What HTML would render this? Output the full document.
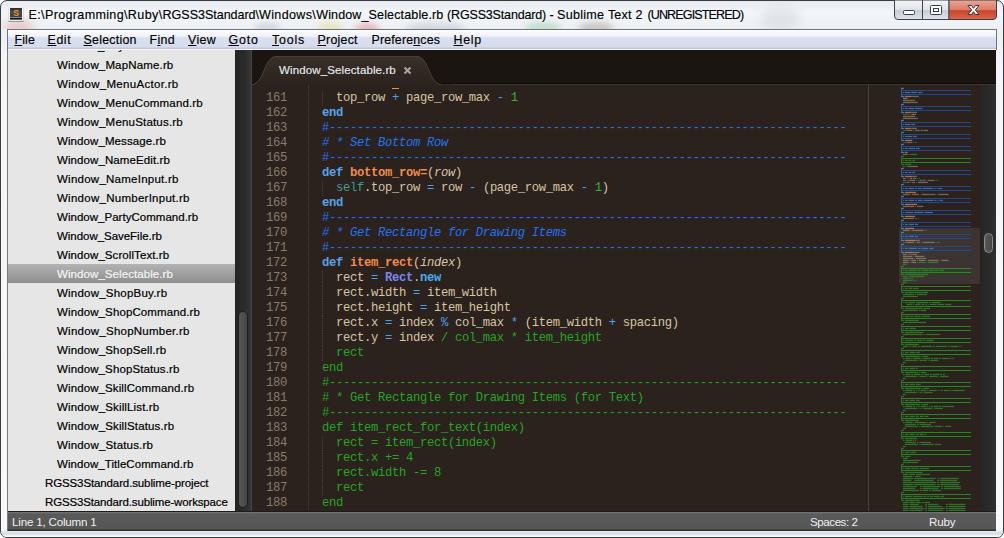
<!DOCTYPE html>
<html><head><meta charset="utf-8">
<style>
*{margin:0;padding:0;box-sizing:border-box}
html,body{width:1004px;height:538px;overflow:hidden;background:#fff}
body{position:relative;font-family:"Liberation Sans",sans-serif}
.abs{position:absolute}
#frame{left:0;top:0;width:1004px;height:538px;border-radius:7px 7px 7px 7px;border:1px solid #3b3b3b;
 background:linear-gradient(180deg,#e6ebf1 0px,#f3f6f9 12px,#eceff3 28px,#f4f5f7 60px,#f7f8f9 500px)}
.ttl{position:absolute;top:7px;font-size:12.56px;color:#000;-webkit-text-stroke:0.15px #000;white-space:pre;line-height:16px}
#menubar{left:7px;top:29px;width:990px;height:21px;border:1px solid #70747a;border-bottom:none;
 background:linear-gradient(180deg,#fdfdfe 0px,#f0f2f8 6px,#dadfef 8px,#d8ddee 17px,#c2c8d8 18px,#c2c8d8 19px,#f4f5f9 19px)}
.mi{position:absolute;top:33px;font-size:12.4px;color:#000;white-space:pre;line-height:14px;-webkit-text-stroke:0.15px #000}
.mi u{text-decoration:underline;text-underline-offset:1px}
#sidebar{left:8px;top:50px;width:227px;height:461px;background:#e6e6e6;overflow:hidden}
.si{position:absolute;left:0;width:227px;height:19px;font-size:11.5px;color:#000;white-space:pre;line-height:19px;padding-top:1px;-webkit-text-stroke:0.2px currentColor}
.si.sel{background:linear-gradient(180deg,#b3b3b3 0,#a4a4a4 40%,#8e8e8e 100%);color:#f4f4f4}
#lframe{left:7px;top:50px;width:1px;height:481px;background:#7a7a7a}
#sbscroll{left:235px;top:50px;width:17px;height:461px;background:linear-gradient(90deg,#242424,#2c2c2c 60%,#383838)}
#sbthumb{left:238px;top:311px;width:10px;height:197px;border-radius:5px;background:linear-gradient(90deg,#575757,#454545);border:1px solid #1e1e1e}
#tabbar{left:252px;top:50px;width:744px;height:35px;background:#1b1511}
#code{left:252px;top:85px;width:646px;height:426px;background:#2b221d;overflow:hidden}
#leftline{left:251px;top:50px;width:1px;height:461px;background:#464646}
#mm{left:898px;top:85px;width:82px;height:426px;background:#2b221d;overflow:hidden}
#vscroll{left:980px;top:85px;width:16px;height:426px;background:linear-gradient(90deg,#252525,#2e2e2e)}
#vthumb{left:984px;top:233px;width:9px;height:20px;border-radius:4.5px;background:linear-gradient(90deg,#5a5a5a,#444);border:1px solid #8c8c8c}
#status{left:8px;top:511px;width:988px;height:20px;background:linear-gradient(180deg,#1e1a18 0,#1e1a18 1px,#777 1px,#6a6a6a 2px,#5a5a5a 3px,#565656 18px,#2e2e2e 19px)}
.st{position:absolute;top:514px;font-size:11.6px;color:#f0f0f0;white-space:pre;line-height:15px}
.ln{position:absolute;left:0px;width:35px;text-align:right;font-family:"Liberation Mono",monospace;font-size:12.2px;letter-spacing:-0.32px;line-height:15px;color:#8a7c6c;white-space:pre}
.cl{position:absolute;left:56px;font-family:"Liberation Mono",monospace;font-size:12.2px;letter-spacing:-0.32px;line-height:15px;color:#d7c5a3;white-space:pre}
.k{color:#56a3ea;font-weight:bold}
.f{color:#f08c4c;font-weight:bold}
.c{color:#2272f6;font-style:italic}
.cd{color:#2272f6}
.o{color:#4aa0f0}
.n{color:#33b533}
.s{color:#3d9b9b}
.p{font-style:italic}
.cls{color:#7b86f2;font-weight:bold}
.nw{color:#45acf0;font-weight:bold}
.g{color:#24a524}
#tabtxt{left:279px;top:63px;font-size:11.55px;color:#e6eaee;-webkit-text-stroke:0.15px #e6eaee;letter-spacing:0.1px;white-space:pre;line-height:15px}
#btns{left:894px;top:0;width:103px;height:20px}
</style></head><body>
<div id="frame" class="abs"></div>
<div class="abs" style="left:0;top:0;width:1004px;height:29px;overflow:hidden;border-radius:7px 7px 0 0">
<div class="abs" style="left:4px;top:21px;width:30px;height:12px;border-radius:50%;background:#e09898;opacity:.5;filter:blur(4px)"></div>
<div class="abs" style="left:255px;top:22px;width:25px;height:12px;border-radius:50%;background:#b8c4d0;opacity:.5;filter:blur(3px)"></div>
<div class="abs" style="left:318px;top:22px;width:25px;height:12px;border-radius:50%;background:#e8d890;opacity:.55;filter:blur(3px)"></div>
<div class="abs" style="left:355px;top:23px;width:24px;height:12px;border-radius:50%;background:#e07878;opacity:.45;filter:blur(3px)"></div>
<div class="abs" style="left:405px;top:23px;width:60px;height:12px;border-radius:50%;background:#b0b8c4;opacity:.45;filter:blur(3px)"></div>
<div class="abs" style="left:525px;top:22px;width:36px;height:12px;border-radius:50%;background:#90c8a0;opacity:.45;filter:blur(3px)"></div>
<div class="abs" style="left:578px;top:22px;width:36px;height:12px;border-radius:50%;background:#a09890;opacity:.45;filter:blur(3px)"></div>
<div class="abs" style="left:760px;top:8px;width:40px;height:22px;border-radius:50%;background:#c8ccd2;opacity:.4;filter:blur(5px)"></div>
</div>

<svg class="abs" style="left:8px;top:7px" width="16" height="16" viewBox="0 0 16 16">
 <defs><linearGradient id="gi" x1="0" y1="0" x2="0" y2="1"><stop offset="0" stop-color="#2c2c2c"/><stop offset="0.3" stop-color="#4a4a4a"/><stop offset="1" stop-color="#3a3a3a"/></linearGradient></defs>
 <rect x="0.5" y="12.5" width="15" height="2.5" rx="1" fill="#3a3a3a" opacity="0.6"/>
 <rect x="0.5" y="0" width="15" height="14" rx="1.5" fill="#fdfdfd" stroke="#d0d0d0" stroke-width="0.6"/>
 <rect x="2" y="1" width="12" height="11.5" fill="url(#gi)"/>
 <rect x="2" y="10" width="12" height="0.9" fill="#9a9a9a"/>
 <rect x="2" y="10.9" width="12" height="1.6" fill="#1c1c1c"/>
 <text x="8" y="9.2" font-family="Liberation Sans" font-weight="bold" font-size="8.5" fill="#f7931e" text-anchor="middle">S</text>
</svg>
<div class="ttl" style="left:28.6px;letter-spacing:0.337px">E:\Programming\</div><div class="ttl" style="left:127.8px;letter-spacing:0.404px">Ruby\</div><div class="ttl" style="left:162.6px;letter-spacing:-0.04px">RGSS3Standard\</div><div class="ttl" style="left:259.0px;letter-spacing:0.351px">Windows\</div><div class="ttl" style="left:316.2px;letter-spacing:0.118px">Window_Selectable.rb </div><div class="ttl" style="left:447.0px;letter-spacing:-0.182px">(RGSS3Standard) </div><div class="ttl" style="left:549.4px;letter-spacing:0.014px">- </div><div class="ttl" style="left:557.1px;letter-spacing:0.246px">Sublime </div><div class="ttl" style="left:607.9px;letter-spacing:0.2px">Text </div><div class="ttl" style="left:635.4px;letter-spacing:0.766px">2 </div><div class="ttl" style="left:647.4px;letter-spacing:-0.875px">(UNREGISTERED)</div>
<svg id="btns" class="abs" width="103" height="20" viewBox="0 0 103 20">
 <defs>
  <linearGradient id="gb" x1="0" y1="0" x2="0" y2="1">
   <stop offset="0" stop-color="#f4f6f9"/><stop offset="0.5" stop-color="#dfe3e8"/><stop offset="0.55" stop-color="#c6ccd4"/><stop offset="1" stop-color="#dfe4ea"/>
  </linearGradient>
  <linearGradient id="gr" x1="0" y1="0" x2="0" y2="1">
   <stop offset="0" stop-color="#eaa698"/><stop offset="0.5" stop-color="#dc7c68"/><stop offset="0.55" stop-color="#c8432a"/><stop offset="1" stop-color="#dc6a4c"/>
  </linearGradient>
 </defs>
 <path d="M0.5,0 L0.5,16 Q0.5,19.5 4,19.5 L28.5,19.5 L28.5,0 Z" fill="url(#gb)" stroke="#3d424a"/>
 <path d="M28.5,0 L28.5,19.5 L55,19.5 L55,0 Z" fill="url(#gb)" stroke="#3d424a"/>
 <path d="M55,0 L55,19.5 L99,19.5 Q102.5,19.5 102.5,16 L102.5,0 Z" fill="url(#gr)" stroke="#3d424a"/>
 <rect x="9.5" y="10.5" width="11" height="4" rx="1" fill="#fff" stroke="#394050"/>
 <rect x="36.5" y="5.5" width="11" height="9" rx="1" fill="#fff" stroke="#394050"/>
 <rect x="39.5" y="8.5" width="5" height="3" fill="none" stroke="#394050"/>
 <path d="M74,5.5 L77.6,5.5 L79.5,8.3 L81.4,5.5 L85,5.5 L81.4,10 L85,14.5 L81.4,14.5 L79.5,11.7 L77.6,14.5 L74,14.5 L77.6,10 Z" fill="#fff" stroke="#3a3340" stroke-width="1" stroke-linejoin="miter"/>
</svg>
<div id="menubar" class="abs"></div>
<div class="mi" style="left:14.5px;letter-spacing:0.15px"><u>F</u>ile</div>
<div class="mi" style="left:47.5px;letter-spacing:0.6px"><u>E</u>dit</div>
<div class="mi" style="left:83.5px;letter-spacing:0.25px"><u>S</u>election</div>
<div class="mi" style="left:149.5px;letter-spacing:0.33px">F<u>i</u>nd</div>
<div class="mi" style="left:188px;letter-spacing:0.33px"><u>V</u>iew</div>
<div class="mi" style="left:228.5px;letter-spacing:0.8px"><u>G</u>oto</div>
<div class="mi" style="left:272px;letter-spacing:0.8px"><u>T</u>ools</div>
<div class="mi" style="left:317.5px;letter-spacing:0.25px"><u>P</u>roject</div>
<div class="mi" style="left:371.5px;letter-spacing:0.16px">Prefere<u>n</u>ces</div>
<div class="mi" style="left:453.5px;letter-spacing:0.7px"><u>H</u>elp</div>
<div id="sidebar" class="abs">
<div class="si" style="top:-14px;padding-left:49px">Window_KeyItem.rb</div>
<div class="si" style="top:5px;padding-left:49px;letter-spacing:0.156px">Window_MapName.rb</div>
<div class="si" style="top:24px;padding-left:49px;letter-spacing:0.306px">Window_MenuActor.rb</div>
<div class="si" style="top:43px;padding-left:49px;letter-spacing:0.160px">Window_MenuCommand.rb</div>
<div class="si" style="top:62px;padding-left:49px;letter-spacing:0.189px">Window_MenuStatus.rb</div>
<div class="si" style="top:81px;padding-left:49px;letter-spacing:0.088px">Window_Message.rb</div>
<div class="si" style="top:100px;padding-left:49px;letter-spacing:0.094px">Window_NameEdit.rb</div>
<div class="si" style="top:119px;padding-left:49px;letter-spacing:0.250px">Window_NameInput.rb</div>
<div class="si" style="top:138px;padding-left:49px;letter-spacing:0.265px">Window_NumberInput.rb</div>
<div class="si" style="top:157px;padding-left:49px;letter-spacing:0.024px">Window_PartyCommand.rb</div>
<div class="si" style="top:176px;padding-left:49px;letter-spacing:-0.035px">Window_SaveFile.rb</div>
<div class="si" style="top:195px;padding-left:49px;letter-spacing:0.079px">Window_ScrollText.rb</div>
<div class="si sel" style="top:214px;padding-left:49px;letter-spacing:0.079px">Window_Selectable.rb</div>
<div class="si" style="top:233px;padding-left:49px;letter-spacing:0.219px">Window_ShopBuy.rb</div>
<div class="si" style="top:252px;padding-left:49px;letter-spacing:0.115px">Window_ShopCommand.rb</div>
<div class="si" style="top:271px;padding-left:49px;letter-spacing:0.242px">Window_ShopNumber.rb</div>
<div class="si" style="top:290px;padding-left:49px;letter-spacing:0.141px">Window_ShopSell.rb</div>
<div class="si" style="top:309px;padding-left:49px;letter-spacing:0.116px">Window_ShopStatus.rb</div>
<div class="si" style="top:328px;padding-left:49px;letter-spacing:0.110px">Window_SkillCommand.rb</div>
<div class="si" style="top:347px;padding-left:49px;letter-spacing:0.139px">Window_SkillList.rb</div>
<div class="si" style="top:366px;padding-left:49px;letter-spacing:0.135px">Window_SkillStatus.rb</div>
<div class="si" style="top:385px;padding-left:49px;letter-spacing:0.167px">Window_Status.rb</div>
<div class="si" style="top:404px;padding-left:49px;letter-spacing:0.062px">Window_TitleCommand.rb</div>
<div class="si" style="top:423px;padding-left:37px;letter-spacing:-0.118px">RGSS3Standard.sublime-project</div>
<div class="si" style="top:442px;padding-left:37px;letter-spacing:-0.147px">RGSS3Standard.sublime-workspace</div>
</div>
<div id="lframe" class="abs"></div>
<div id="sbscroll" class="abs"></div>
<div id="sbthumb" class="abs"></div>
<div id="tabbar" class="abs"></div>
<div class="abs" style="left:252px;top:83px;width:744px;height:1px;background:#100c0a"></div>
<div class="abs" style="left:252px;top:84px;width:744px;height:1px;background:#3e3530"></div>
<svg class="abs" style="left:252px;top:50px" width="200" height="36" viewBox="252 50 200 36">
 <defs><linearGradient id="gt" x1="0" y1="0" x2="0" y2="1"><stop offset="0" stop-color="#392f29"/><stop offset="1" stop-color="#2b221d"/></linearGradient></defs>
 <path d="M250,86 L250,84.5 L252,84.5 C264,84.5 264,56.5 276,56.5 L417,56.5 C429,56.5 429,84.5 441,84.5 L452,84.5 L452,86 Z" fill="url(#gt)" stroke="none"/>
 <path d="M252,84.5 C264,84.5 264,56.5 276,56.5 L417,56.5 C429,56.5 429,84.5 441,84.5" fill="none" stroke="#4b4039" stroke-width="1"/>
 <path d="M404.5,67.5 L410.5,73.5 M410.5,67.5 L404.5,73.5" stroke="#a9a6a2" stroke-width="2"/>
</svg>
<div id="tabtxt" class="abs">Window_Selectable.rb</div>
<div id="code" class="abs">
<div class="abs" style="left:140px;top:3px;width:7px;height:1px;background:#f08c4c"></div>
<div class="ln" style="top:6px">161</div>
<div class="cl" style="top:6px">    top_row <span class="o">+</span> page_row_max <span class="o">-</span> <span class="n">1</span></div>
<div class="ln" style="top:21px">162</div>
<div class="cl" style="top:21px">  <span class="k">end</span></div>
<div class="ln" style="top:36px">163</div>
<div class="cl" style="top:36px">  <span class="cd">#--------------------------------------------------------------------------</span></div>
<div class="ln" style="top:51px">164</div>
<div class="cl" style="top:51px">  <span class="c"># * Set Bottom Row</span></div>
<div class="ln" style="top:66px">165</div>
<div class="cl" style="top:66px">  <span class="cd">#--------------------------------------------------------------------------</span></div>
<div class="ln" style="top:81px">166</div>
<div class="cl" style="top:81px">  <span class="k">def</span> <span class="f">bottom_row=</span>(<span class="p">row</span>)</div>
<div class="ln" style="top:96px">167</div>
<div class="cl" style="top:96px">    <span class="s">self</span>.top_row <span class="o">=</span> row <span class="o">-</span> (page_row_max <span class="o">-</span> <span class="n">1</span>)</div>
<div class="ln" style="top:111px">168</div>
<div class="cl" style="top:111px">  <span class="k">end</span></div>
<div class="ln" style="top:126px">169</div>
<div class="cl" style="top:126px">  <span class="cd">#--------------------------------------------------------------------------</span></div>
<div class="ln" style="top:141px">170</div>
<div class="cl" style="top:141px">  <span class="c"># * Get Rectangle for Drawing Items</span></div>
<div class="ln" style="top:156px">171</div>
<div class="cl" style="top:156px">  <span class="cd">#--------------------------------------------------------------------------</span></div>
<div class="ln" style="top:171px">172</div>
<div class="cl" style="top:171px">  <span class="k">def</span> <span class="f">item_rect</span>(<span class="p">index</span>)</div>
<div class="ln" style="top:186px">173</div>
<div class="cl" style="top:186px">    rect <span class="o">=</span> <span class="cls">Rect</span>.<span class="nw">new</span></div>
<div class="ln" style="top:201px">174</div>
<div class="cl" style="top:201px">    rect.width <span class="o">=</span> item_width</div>
<div class="ln" style="top:216px">175</div>
<div class="cl" style="top:216px">    rect.height <span class="o">=</span> item_height</div>
<div class="ln" style="top:231px">176</div>
<div class="cl" style="top:231px">    rect.x <span class="o">=</span> index <span class="o">%</span> col_max <span class="o">*</span> (item_width <span class="o">+</span> spacing)</div>
<div class="ln" style="top:246px">177</div>
<div class="cl" style="top:246px">    rect.y <span class="o">=</span> index <span class="g">/ col_max * item_height</span></div>
<div class="ln" style="top:261px">178</div>
<div class="cl" style="top:261px">    <span class="g">rect</span></div>
<div class="ln" style="top:276px">179</div>
<div class="cl" style="top:276px">  <span class="g">end</span></div>
<div class="ln" style="top:291px">180</div>
<div class="cl" style="top:291px">  <span class="g">#--------------------------------------------------------------------------</span></div>
<div class="ln" style="top:306px">181</div>
<div class="cl" style="top:306px">  <span class="g"># * Get Rectangle for Drawing Items (for Text)</span></div>
<div class="ln" style="top:321px">182</div>
<div class="cl" style="top:321px">  <span class="g">#--------------------------------------------------------------------------</span></div>
<div class="ln" style="top:336px">183</div>
<div class="cl" style="top:336px">  <span class="g">def item_rect_for_text(index)</span></div>
<div class="ln" style="top:351px">184</div>
<div class="cl" style="top:351px">    <span class="g">rect = item_rect(index)</span></div>
<div class="ln" style="top:366px">185</div>
<div class="cl" style="top:366px">    <span class="g">rect.x += 4</span></div>
<div class="ln" style="top:381px">186</div>
<div class="cl" style="top:381px">    <span class="g">rect.width -= 8</span></div>
<div class="ln" style="top:396px">187</div>
<div class="cl" style="top:396px">    <span class="g">rect</span></div>
<div class="ln" style="top:411px">188</div>
<div class="cl" style="top:411px">  <span class="g">end</span></div>
<div class="ln" style="top:426px">189</div>
<div class="cl" style="top:426px">  <span class="g">#--------------------------------------------------------------------------</span></div>
</div>
<div id="leftline" class="abs"></div>
<div class="abs" style="left:868px;top:85px;width:1px;height:426px;background:#4a403a"></div>
<div class="abs" style="left:308px;top:85px;width:1px;height:426px;background:repeating-linear-gradient(180deg,#4d4239 0 1px,transparent 1px 2px)"></div>
<div class="abs" style="left:322px;top:91px;width:1px;height:15px;background:repeating-linear-gradient(180deg,#4d4239 0 1px,transparent 1px 2px)"></div>
<div class="abs" style="left:322px;top:181px;width:1px;height:15px;background:repeating-linear-gradient(180deg,#4d4239 0 1px,transparent 1px 2px)"></div>
<div class="abs" style="left:322px;top:271px;width:1px;height:15px;background:repeating-linear-gradient(180deg,#4d4239 0 1px,transparent 1px 2px)"></div>
<div class="abs" style="left:322px;top:286px;width:1px;height:15px;background:repeating-linear-gradient(180deg,#4d4239 0 1px,transparent 1px 2px)"></div>
<div class="abs" style="left:322px;top:301px;width:1px;height:15px;background:repeating-linear-gradient(180deg,#4d4239 0 1px,transparent 1px 2px)"></div>
<div class="abs" style="left:322px;top:316px;width:1px;height:15px;background:repeating-linear-gradient(180deg,#4d4239 0 1px,transparent 1px 2px)"></div>
<div class="abs" style="left:322px;top:331px;width:1px;height:15px;background:repeating-linear-gradient(180deg,#4d4239 0 1px,transparent 1px 2px)"></div>
<div class="abs" style="left:322px;top:346px;width:1px;height:15px;background:repeating-linear-gradient(180deg,#4d4239 0 1px,transparent 1px 2px)"></div>
<div class="abs" style="left:322px;top:436px;width:1px;height:15px;background:repeating-linear-gradient(180deg,#4d4239 0 1px,transparent 1px 2px)"></div>
<div class="abs" style="left:322px;top:451px;width:1px;height:15px;background:repeating-linear-gradient(180deg,#4d4239 0 1px,transparent 1px 2px)"></div>
<div class="abs" style="left:322px;top:466px;width:1px;height:15px;background:repeating-linear-gradient(180deg,#4d4239 0 1px,transparent 1px 2px)"></div>
<div class="abs" style="left:322px;top:481px;width:1px;height:15px;background:repeating-linear-gradient(180deg,#4d4239 0 1px,transparent 1px 2px)"></div>
<div id="mm" class="abs">
<div class="abs" style="left:1px;top:143px;width:82px;height:56px;background:#3b3430;border-radius:3px"></div>
<svg width="82" height="426" style="position:absolute;left:0;top:0"><rect x="3.07" y="2.8" width="2.80" height="1.3" fill="#56a3ea" opacity="0.7"/><rect x="3.07" y="4.5" width="1" height="2" fill="#3d8ae8" opacity="0.7"/><rect x="4.00" y="5" width="69.04" height="1" fill="#1b4c9e" opacity="0.95"/><rect x="3.07" y="6.5" width="1" height="2" fill="#3d8ae8" opacity="0.7"/><rect x="4.93" y="6.8" width="0.93" height="1.3" fill="#3d8ae8" opacity="0.7"/><rect x="6.80" y="6.8" width="5.60" height="1.3" fill="#3d8ae8" opacity="0.7"/><rect x="13.33" y="6.8" width="5.60" height="1.3" fill="#3d8ae8" opacity="0.7"/><rect x="19.86" y="6.8" width="4.67" height="1.3" fill="#3d8ae8" opacity="0.7"/><rect x="3.07" y="8.5" width="1" height="2" fill="#3d8ae8" opacity="0.7"/><rect x="4.00" y="9" width="69.04" height="1" fill="#1b4c9e" opacity="0.95"/><rect x="3.07" y="10.8" width="2.80" height="1.3" fill="#56a3ea" opacity="0.7"/><rect x="6.80" y="10.8" width="6.53" height="1.3" fill="#f08c4c" opacity="0.7"/><rect x="13.33" y="10.8" width="0.93" height="1.3" fill="#d7c5a3" opacity="0.42"/><rect x="14.26" y="10.8" width="5.60" height="1.3" fill="#d7c5a3" opacity="0.42"/><rect x="19.86" y="10.8" width="0.93" height="1.3" fill="#d7c5a3" opacity="0.42"/><rect x="4.93" y="12.8" width="4.67" height="1.3" fill="#56a3ea" opacity="0.7"/><rect x="4.93" y="14.8" width="12.13" height="1.3" fill="#d7c5a3" opacity="0.42"/><rect x="4.93" y="16.8" width="14.93" height="1.3" fill="#d7c5a3" opacity="0.42"/><rect x="3.07" y="18.8" width="2.80" height="1.3" fill="#56a3ea" opacity="0.7"/><rect x="3.07" y="20.5" width="1" height="2" fill="#3d8ae8" opacity="0.7"/><rect x="4.00" y="21" width="69.04" height="1" fill="#1b4c9e" opacity="0.95"/><rect x="3.07" y="22.5" width="1" height="2" fill="#3d8ae8" opacity="0.7"/><rect x="4.93" y="22.8" width="0.93" height="1.3" fill="#3d8ae8" opacity="0.7"/><rect x="6.80" y="22.8" width="2.80" height="1.3" fill="#3d8ae8" opacity="0.7"/><rect x="10.53" y="22.8" width="5.60" height="1.3" fill="#3d8ae8" opacity="0.7"/><rect x="17.06" y="22.8" width="7.46" height="1.3" fill="#3d8ae8" opacity="0.7"/><rect x="3.07" y="24.5" width="1" height="2" fill="#3d8ae8" opacity="0.7"/><rect x="4.00" y="25" width="69.04" height="1" fill="#1b4c9e" opacity="0.95"/><rect x="3.07" y="26.8" width="2.80" height="1.3" fill="#56a3ea" opacity="0.7"/><rect x="6.80" y="26.8" width="5.60" height="1.3" fill="#f08c4c" opacity="0.7"/><rect x="12.40" y="26.8" width="0.93" height="1.3" fill="#d7c5a3" opacity="0.42"/><rect x="13.33" y="26.8" width="4.67" height="1.3" fill="#d7c5a3" opacity="0.42"/><rect x="17.99" y="26.8" width="0.93" height="1.3" fill="#d7c5a3" opacity="0.42"/><rect x="4.93" y="28.8" width="5.60" height="1.3" fill="#3d9b9b" opacity="0.42"/><rect x="11.46" y="28.8" width="0.93" height="1.3" fill="#4aa0f0" opacity="0.42"/><rect x="13.33" y="28.8" width="4.67" height="1.3" fill="#d7c5a3" opacity="0.42"/><rect x="4.93" y="30.8" width="12.13" height="1.3" fill="#d7c5a3" opacity="0.42"/><rect x="4.93" y="32.8" width="14.93" height="1.3" fill="#d7c5a3" opacity="0.42"/><rect x="3.07" y="34.8" width="2.80" height="1.3" fill="#56a3ea" opacity="0.7"/><rect x="3.07" y="36.5" width="1" height="2" fill="#3d8ae8" opacity="0.7"/><rect x="4.00" y="37" width="69.04" height="1" fill="#1b4c9e" opacity="0.95"/><rect x="3.07" y="38.5" width="1" height="2" fill="#3d8ae8" opacity="0.7"/><rect x="4.93" y="38.8" width="0.93" height="1.3" fill="#3d8ae8" opacity="0.7"/><rect x="6.80" y="38.8" width="5.60" height="1.3" fill="#3d8ae8" opacity="0.7"/><rect x="13.33" y="38.8" width="3.73" height="1.3" fill="#3d8ae8" opacity="0.7"/><rect x="3.07" y="40.5" width="1" height="2" fill="#3d8ae8" opacity="0.7"/><rect x="4.00" y="41" width="69.04" height="1" fill="#1b4c9e" opacity="0.95"/><rect x="3.07" y="42.8" width="2.80" height="1.3" fill="#56a3ea" opacity="0.7"/><rect x="6.80" y="42.8" width="5.60" height="1.3" fill="#f08c4c" opacity="0.7"/><rect x="12.40" y="42.8" width="0.93" height="1.3" fill="#d7c5a3" opacity="0.42"/><rect x="13.33" y="42.8" width="4.67" height="1.3" fill="#d7c5a3" opacity="0.42"/><rect x="17.99" y="42.8" width="0.93" height="1.3" fill="#d7c5a3" opacity="0.42"/><rect x="4.93" y="44.8" width="3.73" height="1.3" fill="#3d9b9b" opacity="0.42"/><rect x="8.66" y="44.8" width="0.93" height="1.3" fill="#d7c5a3" opacity="0.42"/><rect x="9.60" y="44.8" width="4.67" height="1.3" fill="#d7c5a3" opacity="0.42"/><rect x="15.20" y="44.8" width="0.93" height="1.3" fill="#4aa0f0" opacity="0.42"/><rect x="17.06" y="44.8" width="4.67" height="1.3" fill="#d7c5a3" opacity="0.42"/><rect x="22.66" y="44.8" width="1.87" height="1.3" fill="#56a3ea" opacity="0.7"/><rect x="25.46" y="44.8" width="4.67" height="1.3" fill="#d7c5a3" opacity="0.42"/><rect x="3.07" y="46.8" width="2.80" height="1.3" fill="#56a3ea" opacity="0.7"/><rect x="3.07" y="48.5" width="1" height="2" fill="#3d8ae8" opacity="0.7"/><rect x="4.00" y="49" width="69.04" height="1" fill="#1b4c9e" opacity="0.95"/><rect x="3.07" y="50.5" width="1" height="2" fill="#3d8ae8" opacity="0.7"/><rect x="4.93" y="50.8" width="0.93" height="1.3" fill="#3d8ae8" opacity="0.7"/><rect x="6.80" y="50.8" width="7.46" height="1.3" fill="#3d8ae8" opacity="0.7"/><rect x="15.20" y="50.8" width="3.73" height="1.3" fill="#3d8ae8" opacity="0.7"/><rect x="3.07" y="52.5" width="1" height="2" fill="#3d8ae8" opacity="0.7"/><rect x="4.00" y="53" width="69.04" height="1" fill="#1b4c9e" opacity="0.95"/><rect x="3.07" y="54.8" width="2.80" height="1.3" fill="#56a3ea" opacity="0.7"/><rect x="6.80" y="54.8" width="7.46" height="1.3" fill="#f08c4c" opacity="0.7"/><rect x="4.93" y="56.8" width="3.73" height="1.3" fill="#3d9b9b" opacity="0.42"/><rect x="8.66" y="56.8" width="0.93" height="1.3" fill="#d7c5a3" opacity="0.42"/><rect x="9.60" y="56.8" width="4.67" height="1.3" fill="#d7c5a3" opacity="0.42"/><rect x="15.20" y="56.8" width="0.93" height="1.3" fill="#4aa0f0" opacity="0.42"/><rect x="17.06" y="56.8" width="0.93" height="1.3" fill="#4aa0f0" opacity="0.42"/><rect x="17.99" y="56.8" width="0.93" height="1.3" fill="#2fb02f" opacity="0.55"/><rect x="3.07" y="58.8" width="2.80" height="1.3" fill="#56a3ea" opacity="0.7"/><rect x="3.07" y="60.5" width="1" height="2" fill="#3d8ae8" opacity="0.7"/><rect x="4.00" y="61" width="69.04" height="1" fill="#1b4c9e" opacity="0.95"/><rect x="3.07" y="62.5" width="1" height="2" fill="#3d8ae8" opacity="0.7"/><rect x="4.93" y="62.8" width="0.93" height="1.3" fill="#3d8ae8" opacity="0.7"/><rect x="6.80" y="62.8" width="2.80" height="1.3" fill="#3d8ae8" opacity="0.7"/><rect x="10.53" y="62.8" width="6.53" height="1.3" fill="#3d8ae8" opacity="0.7"/><rect x="17.99" y="62.8" width="3.73" height="1.3" fill="#3d8ae8" opacity="0.7"/><rect x="3.07" y="64.5" width="1" height="2" fill="#3d8ae8" opacity="0.7"/><rect x="4.00" y="65" width="69.04" height="1" fill="#1b4c9e" opacity="0.95"/><rect x="3.07" y="66.8" width="2.80" height="1.3" fill="#56a3ea" opacity="0.7"/><rect x="6.80" y="66.8" width="2.80" height="1.3" fill="#f08c4c" opacity="0.7"/><rect x="4.93" y="68.8" width="4.67" height="1.3" fill="#d7c5a3" opacity="0.42"/><rect x="10.53" y="68.8" width="0.93" height="1.3" fill="#2fb02f" opacity="0.55"/><rect x="12.40" y="68.8" width="6.53" height="1.3" fill="#2fb02f" opacity="0.55"/><rect x="3.07" y="70.8" width="2.80" height="1.3" fill="#2fb02f" opacity="0.55"/><rect x="3.07" y="72.5" width="1" height="2" fill="#2fb02f" opacity="0.7"/><rect x="4.00" y="73" width="69.04" height="1" fill="#1c921c" opacity="0.95"/><rect x="3.07" y="74.5" width="1" height="2" fill="#2fb02f" opacity="0.7"/><rect x="4.93" y="74.8" width="0.93" height="1.3" fill="#2fb02f" opacity="0.55"/><rect x="6.80" y="74.8" width="2.80" height="1.3" fill="#2fb02f" opacity="0.55"/><rect x="10.53" y="74.8" width="2.80" height="1.3" fill="#2fb02f" opacity="0.55"/><rect x="14.26" y="74.8" width="2.80" height="1.3" fill="#2fb02f" opacity="0.55"/><rect x="3.07" y="76.5" width="1" height="2" fill="#2fb02f" opacity="0.7"/><rect x="4.00" y="77" width="69.04" height="1" fill="#1c921c" opacity="0.95"/><rect x="3.07" y="78.8" width="2.80" height="1.3" fill="#2fb02f" opacity="0.55"/><rect x="6.80" y="78.8" width="6.53" height="1.3" fill="#2fb02f" opacity="0.55"/><rect x="4.93" y="80.8" width="1.87" height="1.3" fill="#2fb02f" opacity="0.55"/><rect x="7.73" y="80.8" width="0.93" height="1.3" fill="#2fb02f" opacity="0.55"/><rect x="9.60" y="80.8" width="10.26" height="1.3" fill="#d7c5a3" opacity="0.42"/><rect x="3.07" y="82.8" width="2.80" height="1.3" fill="#56a3ea" opacity="0.7"/><rect x="3.07" y="84.5" width="1" height="2" fill="#3d8ae8" opacity="0.7"/><rect x="4.00" y="85" width="69.04" height="1" fill="#1b4c9e" opacity="0.95"/><rect x="3.07" y="86.5" width="1" height="2" fill="#3d8ae8" opacity="0.7"/><rect x="4.93" y="86.8" width="0.93" height="1.3" fill="#3d8ae8" opacity="0.7"/><rect x="6.80" y="86.8" width="2.80" height="1.3" fill="#3d8ae8" opacity="0.7"/><rect x="10.53" y="86.8" width="2.80" height="1.3" fill="#3d8ae8" opacity="0.7"/><rect x="14.26" y="86.8" width="2.80" height="1.3" fill="#3d8ae8" opacity="0.7"/><rect x="3.07" y="88.5" width="1" height="2" fill="#3d8ae8" opacity="0.7"/><rect x="4.00" y="89" width="69.04" height="1" fill="#1b4c9e" opacity="0.95"/><rect x="3.07" y="90.8" width="2.80" height="1.3" fill="#56a3ea" opacity="0.7"/><rect x="6.80" y="90.8" width="7.46" height="1.3" fill="#f08c4c" opacity="0.7"/><rect x="14.26" y="90.8" width="0.93" height="1.3" fill="#d7c5a3" opacity="0.42"/><rect x="15.20" y="90.8" width="2.80" height="1.3" fill="#d7c5a3" opacity="0.42"/><rect x="17.99" y="90.8" width="0.93" height="1.3" fill="#d7c5a3" opacity="0.42"/><rect x="4.93" y="92.8" width="2.80" height="1.3" fill="#d7c5a3" opacity="0.42"/><rect x="8.66" y="92.8" width="0.93" height="1.3" fill="#4aa0f0" opacity="0.42"/><rect x="10.53" y="92.8" width="0.93" height="1.3" fill="#2fb02f" opacity="0.55"/><rect x="12.40" y="92.8" width="1.87" height="1.3" fill="#56a3ea" opacity="0.7"/><rect x="15.20" y="92.8" width="2.80" height="1.3" fill="#d7c5a3" opacity="0.42"/><rect x="18.93" y="92.8" width="0.93" height="1.3" fill="#4aa0f0" opacity="0.42"/><rect x="20.79" y="92.8" width="0.93" height="1.3" fill="#2fb02f" opacity="0.55"/><rect x="4.93" y="94.8" width="2.80" height="1.3" fill="#d7c5a3" opacity="0.42"/><rect x="8.66" y="94.8" width="0.93" height="1.3" fill="#4aa0f0" opacity="0.42"/><rect x="10.53" y="94.8" width="6.53" height="1.3" fill="#d7c5a3" opacity="0.42"/><rect x="17.99" y="94.8" width="0.93" height="1.3" fill="#4aa0f0" opacity="0.42"/><rect x="19.86" y="94.8" width="0.93" height="1.3" fill="#2fb02f" opacity="0.55"/><rect x="21.73" y="94.8" width="1.87" height="1.3" fill="#56a3ea" opacity="0.7"/><rect x="24.53" y="94.8" width="2.80" height="1.3" fill="#d7c5a3" opacity="0.42"/><rect x="28.26" y="94.8" width="0.93" height="1.3" fill="#4aa0f0" opacity="0.42"/><rect x="30.12" y="94.8" width="6.53" height="1.3" fill="#d7c5a3" opacity="0.42"/><rect x="37.59" y="94.8" width="0.93" height="1.3" fill="#4aa0f0" opacity="0.42"/><rect x="39.45" y="94.8" width="0.93" height="1.3" fill="#2fb02f" opacity="0.55"/><rect x="4.93" y="96.8" width="3.73" height="1.3" fill="#3d9b9b" opacity="0.42"/><rect x="8.66" y="96.8" width="0.93" height="1.3" fill="#d7c5a3" opacity="0.42"/><rect x="9.60" y="96.8" width="1.87" height="1.3" fill="#d7c5a3" opacity="0.42"/><rect x="12.40" y="96.8" width="0.93" height="1.3" fill="#4aa0f0" opacity="0.42"/><rect x="14.26" y="96.8" width="2.80" height="1.3" fill="#d7c5a3" opacity="0.42"/><rect x="17.99" y="96.8" width="0.93" height="1.3" fill="#4aa0f0" opacity="0.42"/><rect x="19.86" y="96.8" width="10.26" height="1.3" fill="#d7c5a3" opacity="0.42"/><rect x="3.07" y="98.8" width="2.80" height="1.3" fill="#56a3ea" opacity="0.7"/><rect x="3.07" y="100.5" width="1" height="2" fill="#3d8ae8" opacity="0.7"/><rect x="4.00" y="101" width="69.04" height="1" fill="#1b4c9e" opacity="0.95"/><rect x="3.07" y="102.5" width="1" height="2" fill="#3d8ae8" opacity="0.7"/><rect x="4.93" y="102.8" width="0.93" height="1.3" fill="#3d8ae8" opacity="0.7"/><rect x="6.80" y="102.8" width="2.80" height="1.3" fill="#3d8ae8" opacity="0.7"/><rect x="10.53" y="102.8" width="5.60" height="1.3" fill="#3d8ae8" opacity="0.7"/><rect x="17.06" y="102.8" width="1.87" height="1.3" fill="#3d8ae8" opacity="0.7"/><rect x="19.86" y="102.8" width="3.73" height="1.3" fill="#3d8ae8" opacity="0.7"/><rect x="24.53" y="102.8" width="10.26" height="1.3" fill="#3d8ae8" opacity="0.7"/><rect x="35.72" y="102.8" width="1.87" height="1.3" fill="#3d8ae8" opacity="0.7"/><rect x="38.52" y="102.8" width="0.93" height="1.3" fill="#3d8ae8" opacity="0.7"/><rect x="40.39" y="102.8" width="3.73" height="1.3" fill="#3d8ae8" opacity="0.7"/><rect x="3.07" y="104.5" width="1" height="2" fill="#3d8ae8" opacity="0.7"/><rect x="4.00" y="105" width="69.04" height="1" fill="#1b4c9e" opacity="0.95"/><rect x="3.07" y="106.8" width="2.80" height="1.3" fill="#56a3ea" opacity="0.7"/><rect x="6.80" y="106.8" width="11.20" height="1.3" fill="#f08c4c" opacity="0.7"/><rect x="4.93" y="108.8" width="0.93" height="1.3" fill="#d7c5a3" opacity="0.42"/><rect x="5.87" y="108.8" width="5.60" height="1.3" fill="#d7c5a3" opacity="0.42"/><rect x="12.40" y="108.8" width="0.93" height="1.3" fill="#4aa0f0" opacity="0.42"/><rect x="14.26" y="108.8" width="6.53" height="1.3" fill="#d7c5a3" opacity="0.42"/><rect x="21.73" y="108.8" width="0.93" height="1.3" fill="#4aa0f0" opacity="0.42"/><rect x="23.59" y="108.8" width="13.06" height="1.3" fill="#d7c5a3" opacity="0.42"/><rect x="36.65" y="108.8" width="0.93" height="1.3" fill="#d7c5a3" opacity="0.42"/><rect x="38.52" y="108.8" width="0.93" height="1.3" fill="#4aa0f0" opacity="0.42"/><rect x="40.39" y="108.8" width="10.26" height="1.3" fill="#d7c5a3" opacity="0.42"/><rect x="3.07" y="110.8" width="2.80" height="1.3" fill="#56a3ea" opacity="0.7"/><rect x="3.07" y="112.5" width="1" height="2" fill="#3d8ae8" opacity="0.7"/><rect x="4.00" y="113" width="69.04" height="1" fill="#1b4c9e" opacity="0.95"/><rect x="3.07" y="114.5" width="1" height="2" fill="#3d8ae8" opacity="0.7"/><rect x="4.93" y="114.8" width="0.93" height="1.3" fill="#3d8ae8" opacity="0.7"/><rect x="6.80" y="114.8" width="2.80" height="1.3" fill="#3d8ae8" opacity="0.7"/><rect x="10.53" y="114.8" width="5.60" height="1.3" fill="#3d8ae8" opacity="0.7"/><rect x="17.06" y="114.8" width="1.87" height="1.3" fill="#3d8ae8" opacity="0.7"/><rect x="19.86" y="114.8" width="4.67" height="1.3" fill="#3d8ae8" opacity="0.7"/><rect x="25.46" y="114.8" width="10.26" height="1.3" fill="#3d8ae8" opacity="0.7"/><rect x="36.65" y="114.8" width="1.87" height="1.3" fill="#3d8ae8" opacity="0.7"/><rect x="39.45" y="114.8" width="0.93" height="1.3" fill="#3d8ae8" opacity="0.7"/><rect x="41.32" y="114.8" width="3.73" height="1.3" fill="#3d8ae8" opacity="0.7"/><rect x="3.07" y="116.5" width="1" height="2" fill="#3d8ae8" opacity="0.7"/><rect x="4.00" y="117" width="69.04" height="1" fill="#1b4c9e" opacity="0.95"/><rect x="3.07" y="118.8" width="2.80" height="1.3" fill="#56a3ea" opacity="0.7"/><rect x="6.80" y="118.8" width="12.13" height="1.3" fill="#f08c4c" opacity="0.7"/><rect x="4.93" y="120.8" width="11.20" height="1.3" fill="#d7c5a3" opacity="0.42"/><rect x="17.06" y="120.8" width="0.93" height="1.3" fill="#4aa0f0" opacity="0.42"/><rect x="18.93" y="120.8" width="6.53" height="1.3" fill="#d7c5a3" opacity="0.42"/><rect x="3.07" y="122.8" width="2.80" height="1.3" fill="#56a3ea" opacity="0.7"/><rect x="3.07" y="124.5" width="1" height="2" fill="#3d8ae8" opacity="0.7"/><rect x="4.00" y="125" width="69.04" height="1" fill="#1b4c9e" opacity="0.95"/><rect x="3.07" y="126.5" width="1" height="2" fill="#3d8ae8" opacity="0.7"/><rect x="4.93" y="126.8" width="0.93" height="1.3" fill="#3d8ae8" opacity="0.7"/><rect x="6.80" y="126.8" width="8.40" height="1.3" fill="#3d8ae8" opacity="0.7"/><rect x="16.13" y="126.8" width="9.33" height="1.3" fill="#3d8ae8" opacity="0.7"/><rect x="26.39" y="126.8" width="8.40" height="1.3" fill="#3d8ae8" opacity="0.7"/><rect x="3.07" y="128.5" width="1" height="2" fill="#3d8ae8" opacity="0.7"/><rect x="4.00" y="129" width="69.04" height="1" fill="#1b4c9e" opacity="0.95"/><rect x="3.07" y="130.8" width="2.80" height="1.3" fill="#56a3ea" opacity="0.7"/><rect x="6.80" y="130.8" width="10.26" height="1.3" fill="#f08c4c" opacity="0.7"/><rect x="4.93" y="132.8" width="11.20" height="1.3" fill="#d7c5a3" opacity="0.42"/><rect x="17.06" y="132.8" width="0.93" height="1.3" fill="#4aa0f0" opacity="0.42"/><rect x="17.99" y="132.8" width="0.93" height="1.3" fill="#4aa0f0" opacity="0.42"/><rect x="19.86" y="132.8" width="0.93" height="1.3" fill="#2fb02f" opacity="0.55"/><rect x="3.07" y="134.8" width="2.80" height="1.3" fill="#56a3ea" opacity="0.7"/><rect x="3.07" y="136.5" width="1" height="2" fill="#3d8ae8" opacity="0.7"/><rect x="4.00" y="137" width="69.04" height="1" fill="#1b4c9e" opacity="0.95"/><rect x="3.07" y="138.5" width="1" height="2" fill="#3d8ae8" opacity="0.7"/><rect x="4.93" y="138.8" width="0.93" height="1.3" fill="#3d8ae8" opacity="0.7"/><rect x="6.80" y="138.8" width="2.80" height="1.3" fill="#3d8ae8" opacity="0.7"/><rect x="10.53" y="138.8" width="5.60" height="1.3" fill="#3d8ae8" opacity="0.7"/><rect x="17.06" y="138.8" width="2.80" height="1.3" fill="#3d8ae8" opacity="0.7"/><rect x="3.07" y="140.5" width="1" height="2" fill="#3d8ae8" opacity="0.7"/><rect x="4.00" y="141" width="69.04" height="1" fill="#1b4c9e" opacity="0.95"/><rect x="3.07" y="142.8" width="2.80" height="1.3" fill="#56a3ea" opacity="0.7"/><rect x="6.80" y="142.8" width="9.33" height="1.3" fill="#f08c4c" opacity="0.7"/><rect x="4.93" y="144.8" width="6.53" height="1.3" fill="#d7c5a3" opacity="0.42"/><rect x="12.40" y="144.8" width="0.93" height="1.3" fill="#4aa0f0" opacity="0.42"/><rect x="14.26" y="144.8" width="11.20" height="1.3" fill="#d7c5a3" opacity="0.42"/><rect x="26.39" y="144.8" width="0.93" height="1.3" fill="#4aa0f0" opacity="0.42"/><rect x="28.26" y="144.8" width="0.93" height="1.3" fill="#2fb02f" opacity="0.55"/><rect x="3.07" y="146.8" width="2.80" height="1.3" fill="#56a3ea" opacity="0.7"/><rect x="3.07" y="148.5" width="1" height="2" fill="#3d8ae8" opacity="0.7"/><rect x="4.00" y="149" width="69.04" height="1" fill="#1b4c9e" opacity="0.95"/><rect x="3.07" y="150.5" width="1" height="2" fill="#3d8ae8" opacity="0.7"/><rect x="4.93" y="150.8" width="0.93" height="1.3" fill="#3d8ae8" opacity="0.7"/><rect x="6.80" y="150.8" width="2.80" height="1.3" fill="#3d8ae8" opacity="0.7"/><rect x="10.53" y="150.8" width="5.60" height="1.3" fill="#3d8ae8" opacity="0.7"/><rect x="17.06" y="150.8" width="2.80" height="1.3" fill="#3d8ae8" opacity="0.7"/><rect x="3.07" y="152.5" width="1" height="2" fill="#3d8ae8" opacity="0.7"/><rect x="4.00" y="153" width="69.04" height="1" fill="#1b4c9e" opacity="0.95"/><rect x="3.07" y="154.8" width="2.80" height="1.3" fill="#56a3ea" opacity="0.7"/><rect x="6.80" y="154.8" width="10.26" height="1.3" fill="#f08c4c" opacity="0.7"/><rect x="17.06" y="154.8" width="0.93" height="1.3" fill="#d7c5a3" opacity="0.42"/><rect x="17.99" y="154.8" width="2.80" height="1.3" fill="#d7c5a3" opacity="0.42"/><rect x="20.79" y="154.8" width="0.93" height="1.3" fill="#d7c5a3" opacity="0.42"/><rect x="4.93" y="156.8" width="3.73" height="1.3" fill="#3d9b9b" opacity="0.42"/><rect x="8.66" y="156.8" width="0.93" height="1.3" fill="#d7c5a3" opacity="0.42"/><rect x="9.60" y="156.8" width="6.53" height="1.3" fill="#d7c5a3" opacity="0.42"/><rect x="17.06" y="156.8" width="0.93" height="1.3" fill="#4aa0f0" opacity="0.42"/><rect x="18.93" y="156.8" width="2.80" height="1.3" fill="#d7c5a3" opacity="0.42"/><rect x="22.66" y="156.8" width="0.93" height="1.3" fill="#4aa0f0" opacity="0.42"/><rect x="24.53" y="156.8" width="0.93" height="1.3" fill="#d7c5a3" opacity="0.42"/><rect x="25.46" y="156.8" width="11.20" height="1.3" fill="#d7c5a3" opacity="0.42"/><rect x="37.59" y="156.8" width="0.93" height="1.3" fill="#4aa0f0" opacity="0.42"/><rect x="39.45" y="156.8" width="0.93" height="1.3" fill="#2fb02f" opacity="0.55"/><rect x="40.39" y="156.8" width="0.93" height="1.3" fill="#d7c5a3" opacity="0.42"/><rect x="3.07" y="158.8" width="2.80" height="1.3" fill="#56a3ea" opacity="0.7"/><rect x="3.07" y="160.5" width="1" height="2" fill="#3d8ae8" opacity="0.7"/><rect x="4.00" y="161" width="69.04" height="1" fill="#1b4c9e" opacity="0.95"/><rect x="3.07" y="162.5" width="1" height="2" fill="#3d8ae8" opacity="0.7"/><rect x="4.93" y="162.8" width="0.93" height="1.3" fill="#3d8ae8" opacity="0.7"/><rect x="6.80" y="162.8" width="2.80" height="1.3" fill="#3d8ae8" opacity="0.7"/><rect x="10.53" y="162.8" width="8.40" height="1.3" fill="#3d8ae8" opacity="0.7"/><rect x="19.86" y="162.8" width="2.80" height="1.3" fill="#3d8ae8" opacity="0.7"/><rect x="23.59" y="162.8" width="6.53" height="1.3" fill="#3d8ae8" opacity="0.7"/><rect x="31.06" y="162.8" width="4.67" height="1.3" fill="#3d8ae8" opacity="0.7"/><rect x="3.07" y="164.5" width="1" height="2" fill="#3d8ae8" opacity="0.7"/><rect x="4.00" y="165" width="69.04" height="1" fill="#1b4c9e" opacity="0.95"/><rect x="3.07" y="166.8" width="2.80" height="1.3" fill="#56a3ea" opacity="0.7"/><rect x="6.80" y="166.8" width="8.40" height="1.3" fill="#f08c4c" opacity="0.7"/><rect x="15.20" y="166.8" width="0.93" height="1.3" fill="#d7c5a3" opacity="0.42"/><rect x="16.13" y="166.8" width="4.67" height="1.3" fill="#d7c5a3" opacity="0.42"/><rect x="20.79" y="166.8" width="0.93" height="1.3" fill="#d7c5a3" opacity="0.42"/><rect x="4.93" y="168.8" width="3.73" height="1.3" fill="#d7c5a3" opacity="0.42"/><rect x="9.60" y="168.8" width="0.93" height="1.3" fill="#4aa0f0" opacity="0.42"/><rect x="11.46" y="168.8" width="3.73" height="1.3" fill="#9c8cf0" opacity="0.42"/><rect x="15.20" y="168.8" width="0.93" height="1.3" fill="#d7c5a3" opacity="0.42"/><rect x="16.13" y="168.8" width="2.80" height="1.3" fill="#d7c5a3" opacity="0.42"/><rect x="4.93" y="170.8" width="3.73" height="1.3" fill="#d7c5a3" opacity="0.42"/><rect x="8.66" y="170.8" width="0.93" height="1.3" fill="#d7c5a3" opacity="0.42"/><rect x="9.60" y="170.8" width="4.67" height="1.3" fill="#d7c5a3" opacity="0.42"/><rect x="15.20" y="170.8" width="0.93" height="1.3" fill="#4aa0f0" opacity="0.42"/><rect x="17.06" y="170.8" width="9.33" height="1.3" fill="#d7c5a3" opacity="0.42"/><rect x="4.93" y="172.8" width="3.73" height="1.3" fill="#d7c5a3" opacity="0.42"/><rect x="8.66" y="172.8" width="0.93" height="1.3" fill="#d7c5a3" opacity="0.42"/><rect x="9.60" y="172.8" width="5.60" height="1.3" fill="#d7c5a3" opacity="0.42"/><rect x="16.13" y="172.8" width="0.93" height="1.3" fill="#4aa0f0" opacity="0.42"/><rect x="17.99" y="172.8" width="10.26" height="1.3" fill="#d7c5a3" opacity="0.42"/><rect x="4.93" y="174.8" width="3.73" height="1.3" fill="#d7c5a3" opacity="0.42"/><rect x="8.66" y="174.8" width="0.93" height="1.3" fill="#d7c5a3" opacity="0.42"/><rect x="9.60" y="174.8" width="0.93" height="1.3" fill="#d7c5a3" opacity="0.42"/><rect x="11.46" y="174.8" width="0.93" height="1.3" fill="#4aa0f0" opacity="0.42"/><rect x="13.33" y="174.8" width="4.67" height="1.3" fill="#d7c5a3" opacity="0.42"/><rect x="18.93" y="174.8" width="0.93" height="1.3" fill="#4aa0f0" opacity="0.42"/><rect x="20.79" y="174.8" width="6.53" height="1.3" fill="#d7c5a3" opacity="0.42"/><rect x="28.26" y="174.8" width="0.93" height="1.3" fill="#4aa0f0" opacity="0.42"/><rect x="30.12" y="174.8" width="0.93" height="1.3" fill="#d7c5a3" opacity="0.42"/><rect x="31.06" y="174.8" width="9.33" height="1.3" fill="#d7c5a3" opacity="0.42"/><rect x="41.32" y="174.8" width="0.93" height="1.3" fill="#4aa0f0" opacity="0.42"/><rect x="43.19" y="174.8" width="6.53" height="1.3" fill="#d7c5a3" opacity="0.42"/><rect x="49.72" y="174.8" width="0.93" height="1.3" fill="#d7c5a3" opacity="0.42"/><rect x="4.93" y="176.8" width="3.73" height="1.3" fill="#d7c5a3" opacity="0.42"/><rect x="8.66" y="176.8" width="0.93" height="1.3" fill="#d7c5a3" opacity="0.42"/><rect x="9.60" y="176.8" width="0.93" height="1.3" fill="#d7c5a3" opacity="0.42"/><rect x="11.46" y="176.8" width="0.93" height="1.3" fill="#4aa0f0" opacity="0.42"/><rect x="13.33" y="176.8" width="4.67" height="1.3" fill="#d7c5a3" opacity="0.42"/><rect x="18.93" y="176.8" width="0.93" height="1.3" fill="#2fb02f" opacity="0.55"/><rect x="20.79" y="176.8" width="6.53" height="1.3" fill="#2fb02f" opacity="0.55"/><rect x="28.26" y="176.8" width="0.93" height="1.3" fill="#2fb02f" opacity="0.55"/><rect x="30.12" y="176.8" width="10.26" height="1.3" fill="#2fb02f" opacity="0.55"/><rect x="4.93" y="178.8" width="3.73" height="1.3" fill="#2fb02f" opacity="0.55"/><rect x="3.07" y="180.8" width="2.80" height="1.3" fill="#2fb02f" opacity="0.55"/><rect x="3.07" y="182.5" width="1" height="2" fill="#2fb02f" opacity="0.7"/><rect x="4.00" y="183" width="69.04" height="1" fill="#1c921c" opacity="0.95"/><rect x="3.07" y="184.5" width="1" height="2" fill="#2fb02f" opacity="0.7"/><rect x="4.93" y="184.8" width="0.93" height="1.3" fill="#2fb02f" opacity="0.55"/><rect x="6.80" y="184.8" width="2.80" height="1.3" fill="#2fb02f" opacity="0.55"/><rect x="10.53" y="184.8" width="8.40" height="1.3" fill="#2fb02f" opacity="0.55"/><rect x="19.86" y="184.8" width="2.80" height="1.3" fill="#2fb02f" opacity="0.55"/><rect x="23.59" y="184.8" width="6.53" height="1.3" fill="#2fb02f" opacity="0.55"/><rect x="31.06" y="184.8" width="4.67" height="1.3" fill="#2fb02f" opacity="0.55"/><rect x="36.65" y="184.8" width="3.73" height="1.3" fill="#2fb02f" opacity="0.55"/><rect x="41.32" y="184.8" width="4.67" height="1.3" fill="#2fb02f" opacity="0.55"/><rect x="3.07" y="186.5" width="1" height="2" fill="#2fb02f" opacity="0.7"/><rect x="4.00" y="187" width="69.04" height="1" fill="#1c921c" opacity="0.95"/><rect x="3.07" y="188.8" width="2.80" height="1.3" fill="#2fb02f" opacity="0.55"/><rect x="6.80" y="188.8" width="23.33" height="1.3" fill="#2fb02f" opacity="0.55"/><rect x="4.93" y="190.8" width="3.73" height="1.3" fill="#2fb02f" opacity="0.55"/><rect x="9.60" y="190.8" width="0.93" height="1.3" fill="#2fb02f" opacity="0.55"/><rect x="11.46" y="190.8" width="14.93" height="1.3" fill="#2fb02f" opacity="0.55"/><rect x="4.93" y="192.8" width="5.60" height="1.3" fill="#2fb02f" opacity="0.55"/><rect x="11.46" y="192.8" width="1.87" height="1.3" fill="#2fb02f" opacity="0.55"/><rect x="14.26" y="192.8" width="0.93" height="1.3" fill="#2fb02f" opacity="0.55"/><rect x="4.93" y="194.8" width="9.33" height="1.3" fill="#2fb02f" opacity="0.55"/><rect x="15.20" y="194.8" width="1.87" height="1.3" fill="#2fb02f" opacity="0.55"/><rect x="17.99" y="194.8" width="0.93" height="1.3" fill="#2fb02f" opacity="0.55"/><rect x="4.93" y="196.8" width="3.73" height="1.3" fill="#2fb02f" opacity="0.55"/><rect x="3.07" y="198.8" width="2.80" height="1.3" fill="#2fb02f" opacity="0.55"/><rect x="3.07" y="200.5" width="1" height="2" fill="#2fb02f" opacity="0.7"/><rect x="4.00" y="201" width="69.04" height="1" fill="#1c921c" opacity="0.95"/><rect x="3.07" y="202.5" width="1" height="2" fill="#2fb02f" opacity="0.7"/><rect x="4.93" y="202.8" width="0.93" height="1.3" fill="#2fb02f" opacity="0.55"/><rect x="6.80" y="202.8" width="2.80" height="1.3" fill="#2fb02f" opacity="0.55"/><rect x="10.53" y="202.8" width="3.73" height="1.3" fill="#2fb02f" opacity="0.55"/><rect x="15.20" y="202.8" width="5.60" height="1.3" fill="#2fb02f" opacity="0.55"/><rect x="3.07" y="204.5" width="1" height="2" fill="#2fb02f" opacity="0.7"/><rect x="4.00" y="205" width="69.04" height="1" fill="#1c921c" opacity="0.95"/><rect x="3.07" y="206.8" width="2.80" height="1.3" fill="#2fb02f" opacity="0.55"/><rect x="6.80" y="206.8" width="23.33" height="1.3" fill="#2fb02f" opacity="0.55"/><rect x="4.93" y="208.8" width="11.20" height="1.3" fill="#2fb02f" opacity="0.55"/><rect x="17.06" y="208.8" width="0.93" height="1.3" fill="#2fb02f" opacity="0.55"/><rect x="18.93" y="208.8" width="10.26" height="1.3" fill="#2fb02f" opacity="0.55"/><rect x="4.93" y="210.8" width="14.93" height="1.3" fill="#2fb02f" opacity="0.55"/><rect x="3.07" y="212.8" width="2.80" height="1.3" fill="#2fb02f" opacity="0.55"/><rect x="3.07" y="214.5" width="1" height="2" fill="#2fb02f" opacity="0.7"/><rect x="4.00" y="215" width="69.04" height="1" fill="#1c921c" opacity="0.95"/><rect x="3.07" y="216.5" width="1" height="2" fill="#2fb02f" opacity="0.7"/><rect x="4.93" y="216.8" width="0.93" height="1.3" fill="#2fb02f" opacity="0.55"/><rect x="6.80" y="216.8" width="2.80" height="1.3" fill="#2fb02f" opacity="0.55"/><rect x="10.53" y="216.8" width="6.53" height="1.3" fill="#2fb02f" opacity="0.55"/><rect x="17.99" y="216.8" width="12.13" height="1.3" fill="#2fb02f" opacity="0.55"/><rect x="31.06" y="216.8" width="1.87" height="1.3" fill="#2fb02f" opacity="0.55"/><rect x="33.86" y="216.8" width="8.40" height="1.3" fill="#2fb02f" opacity="0.55"/><rect x="3.07" y="218.5" width="1" height="2" fill="#2fb02f" opacity="0.7"/><rect x="8.66" y="218.8" width="5.60" height="1.3" fill="#2fb02f" opacity="0.55"/><rect x="15.20" y="218.8" width="0.93" height="1.3" fill="#2fb02f" opacity="0.55"/><rect x="17.06" y="218.8" width="5.60" height="1.3" fill="#2fb02f" opacity="0.55"/><rect x="23.59" y="218.8" width="2.80" height="1.3" fill="#2fb02f" opacity="0.55"/><rect x="27.32" y="218.8" width="1.87" height="1.3" fill="#2fb02f" opacity="0.55"/><rect x="30.12" y="218.8" width="0.93" height="1.3" fill="#2fb02f" opacity="0.55"/><rect x="31.99" y="218.8" width="6.53" height="1.3" fill="#2fb02f" opacity="0.55"/><rect x="39.45" y="218.8" width="6.53" height="1.3" fill="#2fb02f" opacity="0.55"/><rect x="46.92" y="218.8" width="6.53" height="1.3" fill="#2fb02f" opacity="0.55"/><rect x="3.07" y="220.5" width="1" height="2" fill="#2fb02f" opacity="0.7"/><rect x="4.00" y="221" width="69.04" height="1" fill="#1c921c" opacity="0.95"/><rect x="3.07" y="222.8" width="2.80" height="1.3" fill="#2fb02f" opacity="0.55"/><rect x="6.80" y="222.8" width="17.73" height="1.3" fill="#2fb02f" opacity="0.55"/><rect x="25.46" y="222.8" width="6.53" height="1.3" fill="#2fb02f" opacity="0.55"/><rect x="4.93" y="224.8" width="14.93" height="1.3" fill="#2fb02f" opacity="0.55"/><rect x="20.79" y="224.8" width="0.93" height="1.3" fill="#2fb02f" opacity="0.55"/><rect x="22.66" y="224.8" width="5.60" height="1.3" fill="#2fb02f" opacity="0.55"/><rect x="3.07" y="226.8" width="2.80" height="1.3" fill="#2fb02f" opacity="0.55"/><rect x="3.07" y="228.5" width="1" height="2" fill="#2fb02f" opacity="0.7"/><rect x="4.00" y="229" width="69.04" height="1" fill="#1c921c" opacity="0.95"/><rect x="3.07" y="230.5" width="1" height="2" fill="#2fb02f" opacity="0.7"/><rect x="4.93" y="230.8" width="0.93" height="1.3" fill="#2fb02f" opacity="0.55"/><rect x="6.80" y="230.8" width="4.67" height="1.3" fill="#2fb02f" opacity="0.55"/><rect x="12.40" y="230.8" width="2.80" height="1.3" fill="#2fb02f" opacity="0.55"/><rect x="16.13" y="230.8" width="6.53" height="1.3" fill="#2fb02f" opacity="0.55"/><rect x="23.59" y="230.8" width="8.40" height="1.3" fill="#2fb02f" opacity="0.55"/><rect x="3.07" y="232.5" width="1" height="2" fill="#2fb02f" opacity="0.7"/><rect x="4.00" y="233" width="69.04" height="1" fill="#1c921c" opacity="0.95"/><rect x="3.07" y="234.8" width="2.80" height="1.3" fill="#2fb02f" opacity="0.55"/><rect x="6.80" y="234.8" width="14.00" height="1.3" fill="#2fb02f" opacity="0.55"/><rect x="4.93" y="236.8" width="23.33" height="1.3" fill="#2fb02f" opacity="0.55"/><rect x="3.07" y="238.8" width="2.80" height="1.3" fill="#2fb02f" opacity="0.55"/><rect x="3.07" y="240.5" width="1" height="2" fill="#2fb02f" opacity="0.7"/><rect x="4.00" y="241" width="69.04" height="1" fill="#1c921c" opacity="0.95"/><rect x="3.07" y="242.5" width="1" height="2" fill="#2fb02f" opacity="0.7"/><rect x="4.93" y="242.8" width="0.93" height="1.3" fill="#2fb02f" opacity="0.55"/><rect x="6.80" y="242.8" width="3.73" height="1.3" fill="#2fb02f" opacity="0.55"/><rect x="11.46" y="242.8" width="6.53" height="1.3" fill="#2fb02f" opacity="0.55"/><rect x="3.07" y="244.5" width="1" height="2" fill="#2fb02f" opacity="0.7"/><rect x="4.00" y="245" width="69.04" height="1" fill="#1c921c" opacity="0.95"/><rect x="3.07" y="246.8" width="2.80" height="1.3" fill="#2fb02f" opacity="0.55"/><rect x="6.80" y="246.8" width="18.66" height="1.3" fill="#2fb02f" opacity="0.55"/><rect x="4.93" y="248.8" width="19.59" height="1.3" fill="#2fb02f" opacity="0.55"/><rect x="25.46" y="248.8" width="1.87" height="1.3" fill="#2fb02f" opacity="0.55"/><rect x="28.26" y="248.8" width="14.00" height="1.3" fill="#2fb02f" opacity="0.55"/><rect x="3.07" y="250.8" width="2.80" height="1.3" fill="#2fb02f" opacity="0.55"/><rect x="3.07" y="252.5" width="1" height="2" fill="#2fb02f" opacity="0.7"/><rect x="4.00" y="253" width="69.04" height="1" fill="#1c921c" opacity="0.95"/><rect x="3.07" y="254.5" width="1" height="2" fill="#2fb02f" opacity="0.7"/><rect x="4.93" y="254.8" width="0.93" height="1.3" fill="#2fb02f" opacity="0.55"/><rect x="6.80" y="254.8" width="8.40" height="1.3" fill="#2fb02f" opacity="0.55"/><rect x="16.13" y="254.8" width="1.87" height="1.3" fill="#2fb02f" opacity="0.55"/><rect x="18.93" y="254.8" width="5.60" height="1.3" fill="#2fb02f" opacity="0.55"/><rect x="25.46" y="254.8" width="1.87" height="1.3" fill="#2fb02f" opacity="0.55"/><rect x="28.26" y="254.8" width="7.46" height="1.3" fill="#2fb02f" opacity="0.55"/><rect x="3.07" y="256.5" width="1" height="2" fill="#2fb02f" opacity="0.7"/><rect x="4.00" y="257" width="69.04" height="1" fill="#1c921c" opacity="0.95"/><rect x="3.07" y="258.8" width="2.80" height="1.3" fill="#2fb02f" opacity="0.55"/><rect x="6.80" y="258.8" width="14.00" height="1.3" fill="#2fb02f" opacity="0.55"/><rect x="4.93" y="260.8" width="5.60" height="1.3" fill="#2fb02f" opacity="0.55"/><rect x="11.46" y="260.8" width="1.87" height="1.3" fill="#2fb02f" opacity="0.55"/><rect x="14.26" y="260.8" width="4.67" height="1.3" fill="#2fb02f" opacity="0.55"/><rect x="19.86" y="260.8" width="1.87" height="1.3" fill="#2fb02f" opacity="0.55"/><rect x="22.66" y="260.8" width="11.20" height="1.3" fill="#2fb02f" opacity="0.55"/><rect x="34.79" y="260.8" width="1.87" height="1.3" fill="#2fb02f" opacity="0.55"/><rect x="37.59" y="260.8" width="11.20" height="1.3" fill="#2fb02f" opacity="0.55"/><rect x="49.72" y="260.8" width="1.87" height="1.3" fill="#2fb02f" opacity="0.55"/><rect x="52.52" y="260.8" width="7.46" height="1.3" fill="#2fb02f" opacity="0.55"/><rect x="60.91" y="260.8" width="0.93" height="1.3" fill="#2fb02f" opacity="0.55"/><rect x="62.78" y="260.8" width="0.93" height="1.3" fill="#2fb02f" opacity="0.55"/><rect x="3.07" y="262.8" width="2.80" height="1.3" fill="#2fb02f" opacity="0.55"/><rect x="3.07" y="264.5" width="1" height="2" fill="#2fb02f" opacity="0.7"/><rect x="4.00" y="265" width="69.04" height="1" fill="#1c921c" opacity="0.95"/><rect x="3.07" y="266.5" width="1" height="2" fill="#2fb02f" opacity="0.7"/><rect x="4.93" y="266.8" width="0.93" height="1.3" fill="#2fb02f" opacity="0.55"/><rect x="6.80" y="266.8" width="3.73" height="1.3" fill="#2fb02f" opacity="0.55"/><rect x="11.46" y="266.8" width="5.60" height="1.3" fill="#2fb02f" opacity="0.55"/><rect x="17.99" y="266.8" width="3.73" height="1.3" fill="#2fb02f" opacity="0.55"/><rect x="3.07" y="268.5" width="1" height="2" fill="#2fb02f" opacity="0.7"/><rect x="4.00" y="269" width="69.04" height="1" fill="#1c921c" opacity="0.95"/><rect x="3.07" y="270.8" width="2.80" height="1.3" fill="#2fb02f" opacity="0.55"/><rect x="6.80" y="270.8" width="14.93" height="1.3" fill="#2fb02f" opacity="0.55"/><rect x="22.66" y="270.8" width="0.93" height="1.3" fill="#2fb02f" opacity="0.55"/><rect x="24.53" y="270.8" width="5.60" height="1.3" fill="#2fb02f" opacity="0.55"/><rect x="4.93" y="272.8" width="1.87" height="1.3" fill="#2fb02f" opacity="0.55"/><rect x="7.73" y="272.8" width="4.67" height="1.3" fill="#2fb02f" opacity="0.55"/><rect x="13.33" y="272.8" width="0.93" height="1.3" fill="#2fb02f" opacity="0.55"/><rect x="15.20" y="272.8" width="7.46" height="1.3" fill="#2fb02f" opacity="0.55"/><rect x="23.59" y="272.8" width="0.93" height="1.3" fill="#2fb02f" opacity="0.55"/><rect x="25.46" y="272.8" width="6.53" height="1.3" fill="#2fb02f" opacity="0.55"/><rect x="32.92" y="272.8" width="1.87" height="1.3" fill="#2fb02f" opacity="0.55"/><rect x="35.72" y="272.8" width="4.67" height="1.3" fill="#2fb02f" opacity="0.55"/><rect x="41.32" y="272.8" width="1.87" height="1.3" fill="#2fb02f" opacity="0.55"/><rect x="44.12" y="272.8" width="6.53" height="1.3" fill="#2fb02f" opacity="0.55"/><rect x="51.58" y="272.8" width="1.87" height="1.3" fill="#2fb02f" opacity="0.55"/><rect x="54.38" y="272.8" width="1.87" height="1.3" fill="#2fb02f" opacity="0.55"/><rect x="6.80" y="274.8" width="12.13" height="1.3" fill="#2fb02f" opacity="0.55"/><rect x="19.86" y="274.8" width="0.93" height="1.3" fill="#2fb02f" opacity="0.55"/><rect x="21.73" y="274.8" width="7.46" height="1.3" fill="#2fb02f" opacity="0.55"/><rect x="30.12" y="274.8" width="0.93" height="1.3" fill="#2fb02f" opacity="0.55"/><rect x="31.99" y="274.8" width="8.40" height="1.3" fill="#2fb02f" opacity="0.55"/><rect x="4.93" y="276.8" width="2.80" height="1.3" fill="#2fb02f" opacity="0.55"/><rect x="3.07" y="278.8" width="2.80" height="1.3" fill="#2fb02f" opacity="0.55"/><rect x="3.07" y="280.5" width="1" height="2" fill="#2fb02f" opacity="0.7"/><rect x="4.00" y="281" width="69.04" height="1" fill="#1c921c" opacity="0.95"/><rect x="3.07" y="282.5" width="1" height="2" fill="#2fb02f" opacity="0.7"/><rect x="4.93" y="282.8" width="0.93" height="1.3" fill="#2fb02f" opacity="0.55"/><rect x="6.80" y="282.8" width="3.73" height="1.3" fill="#2fb02f" opacity="0.55"/><rect x="11.46" y="282.8" width="5.60" height="1.3" fill="#2fb02f" opacity="0.55"/><rect x="17.99" y="282.8" width="1.87" height="1.3" fill="#2fb02f" opacity="0.55"/><rect x="3.07" y="284.5" width="1" height="2" fill="#2fb02f" opacity="0.7"/><rect x="4.00" y="285" width="69.04" height="1" fill="#1c921c" opacity="0.95"/><rect x="3.07" y="286.8" width="2.80" height="1.3" fill="#2fb02f" opacity="0.55"/><rect x="6.80" y="286.8" width="13.06" height="1.3" fill="#2fb02f" opacity="0.55"/><rect x="20.79" y="286.8" width="0.93" height="1.3" fill="#2fb02f" opacity="0.55"/><rect x="22.66" y="286.8" width="5.60" height="1.3" fill="#2fb02f" opacity="0.55"/><rect x="4.93" y="288.8" width="1.87" height="1.3" fill="#2fb02f" opacity="0.55"/><rect x="7.73" y="288.8" width="4.67" height="1.3" fill="#2fb02f" opacity="0.55"/><rect x="13.33" y="288.8" width="1.87" height="1.3" fill="#2fb02f" opacity="0.55"/><rect x="16.13" y="288.8" width="6.53" height="1.3" fill="#2fb02f" opacity="0.55"/><rect x="23.59" y="288.8" width="1.87" height="1.3" fill="#2fb02f" opacity="0.55"/><rect x="26.39" y="288.8" width="4.67" height="1.3" fill="#2fb02f" opacity="0.55"/><rect x="31.99" y="288.8" width="1.87" height="1.3" fill="#2fb02f" opacity="0.55"/><rect x="34.79" y="288.8" width="6.53" height="1.3" fill="#2fb02f" opacity="0.55"/><rect x="42.25" y="288.8" width="1.87" height="1.3" fill="#2fb02f" opacity="0.55"/><rect x="45.05" y="288.8" width="1.87" height="1.3" fill="#2fb02f" opacity="0.55"/><rect x="6.80" y="290.8" width="12.13" height="1.3" fill="#2fb02f" opacity="0.55"/><rect x="19.86" y="290.8" width="0.93" height="1.3" fill="#2fb02f" opacity="0.55"/><rect x="21.73" y="290.8" width="6.53" height="1.3" fill="#2fb02f" opacity="0.55"/><rect x="29.19" y="290.8" width="0.93" height="1.3" fill="#2fb02f" opacity="0.55"/><rect x="31.06" y="290.8" width="8.40" height="1.3" fill="#2fb02f" opacity="0.55"/><rect x="40.39" y="290.8" width="0.93" height="1.3" fill="#2fb02f" opacity="0.55"/><rect x="42.25" y="290.8" width="8.40" height="1.3" fill="#2fb02f" opacity="0.55"/><rect x="4.93" y="292.8" width="2.80" height="1.3" fill="#2fb02f" opacity="0.55"/><rect x="3.07" y="294.8" width="2.80" height="1.3" fill="#2fb02f" opacity="0.55"/><rect x="3.07" y="296.5" width="1" height="2" fill="#2fb02f" opacity="0.7"/><rect x="4.00" y="297" width="69.04" height="1" fill="#1c921c" opacity="0.95"/><rect x="3.07" y="298.5" width="1" height="2" fill="#2fb02f" opacity="0.7"/><rect x="4.93" y="298.8" width="0.93" height="1.3" fill="#2fb02f" opacity="0.55"/><rect x="6.80" y="298.8" width="3.73" height="1.3" fill="#2fb02f" opacity="0.55"/><rect x="11.46" y="298.8" width="5.60" height="1.3" fill="#2fb02f" opacity="0.55"/><rect x="17.99" y="298.8" width="4.67" height="1.3" fill="#2fb02f" opacity="0.55"/><rect x="3.07" y="300.5" width="1" height="2" fill="#2fb02f" opacity="0.7"/><rect x="4.00" y="301" width="69.04" height="1" fill="#1c921c" opacity="0.95"/><rect x="3.07" y="302.8" width="2.80" height="1.3" fill="#2fb02f" opacity="0.55"/><rect x="6.80" y="302.8" width="15.86" height="1.3" fill="#2fb02f" opacity="0.55"/><rect x="23.59" y="302.8" width="0.93" height="1.3" fill="#2fb02f" opacity="0.55"/><rect x="25.46" y="302.8" width="5.60" height="1.3" fill="#2fb02f" opacity="0.55"/><rect x="4.93" y="304.8" width="1.87" height="1.3" fill="#2fb02f" opacity="0.55"/><rect x="7.73" y="304.8" width="6.53" height="1.3" fill="#2fb02f" opacity="0.55"/><rect x="15.20" y="304.8" width="1.87" height="1.3" fill="#2fb02f" opacity="0.55"/><rect x="17.99" y="304.8" width="0.93" height="1.3" fill="#2fb02f" opacity="0.55"/><rect x="19.86" y="304.8" width="1.87" height="1.3" fill="#2fb02f" opacity="0.55"/><rect x="22.66" y="304.8" width="5.60" height="1.3" fill="#2fb02f" opacity="0.55"/><rect x="29.19" y="304.8" width="0.93" height="1.3" fill="#2fb02f" opacity="0.55"/><rect x="31.06" y="304.8" width="7.46" height="1.3" fill="#2fb02f" opacity="0.55"/><rect x="39.45" y="304.8" width="0.93" height="1.3" fill="#2fb02f" opacity="0.55"/><rect x="41.32" y="304.8" width="0.93" height="1.3" fill="#2fb02f" opacity="0.55"/><rect x="43.19" y="304.8" width="1.87" height="1.3" fill="#2fb02f" opacity="0.55"/><rect x="45.98" y="304.8" width="4.67" height="1.3" fill="#2fb02f" opacity="0.55"/><rect x="51.58" y="304.8" width="1.87" height="1.3" fill="#2fb02f" opacity="0.55"/><rect x="54.38" y="304.8" width="12.13" height="1.3" fill="#2fb02f" opacity="0.55"/><rect x="6.80" y="306.8" width="12.13" height="1.3" fill="#2fb02f" opacity="0.55"/><rect x="19.86" y="306.8" width="0.93" height="1.3" fill="#2fb02f" opacity="0.55"/><rect x="21.73" y="306.8" width="1.87" height="1.3" fill="#2fb02f" opacity="0.55"/><rect x="24.53" y="306.8" width="0.93" height="1.3" fill="#2fb02f" opacity="0.55"/><rect x="26.39" y="306.8" width="8.40" height="1.3" fill="#2fb02f" opacity="0.55"/><rect x="4.93" y="308.8" width="2.80" height="1.3" fill="#2fb02f" opacity="0.55"/><rect x="3.07" y="310.8" width="2.80" height="1.3" fill="#2fb02f" opacity="0.55"/><rect x="3.07" y="312.5" width="1" height="2" fill="#2fb02f" opacity="0.7"/><rect x="4.00" y="313" width="69.04" height="1" fill="#1c921c" opacity="0.95"/><rect x="3.07" y="314.5" width="1" height="2" fill="#2fb02f" opacity="0.7"/><rect x="4.93" y="314.8" width="0.93" height="1.3" fill="#2fb02f" opacity="0.55"/><rect x="6.80" y="314.8" width="3.73" height="1.3" fill="#2fb02f" opacity="0.55"/><rect x="11.46" y="314.8" width="5.60" height="1.3" fill="#2fb02f" opacity="0.55"/><rect x="17.99" y="314.8" width="3.73" height="1.3" fill="#2fb02f" opacity="0.55"/><rect x="3.07" y="316.5" width="1" height="2" fill="#2fb02f" opacity="0.7"/><rect x="4.00" y="317" width="69.04" height="1" fill="#1c921c" opacity="0.95"/><rect x="3.07" y="318.8" width="2.80" height="1.3" fill="#2fb02f" opacity="0.55"/><rect x="6.80" y="318.8" width="14.93" height="1.3" fill="#2fb02f" opacity="0.55"/><rect x="22.66" y="318.8" width="0.93" height="1.3" fill="#2fb02f" opacity="0.55"/><rect x="24.53" y="318.8" width="5.60" height="1.3" fill="#2fb02f" opacity="0.55"/><rect x="4.93" y="320.8" width="1.87" height="1.3" fill="#2fb02f" opacity="0.55"/><rect x="7.73" y="320.8" width="6.53" height="1.3" fill="#2fb02f" opacity="0.55"/><rect x="15.20" y="320.8" width="1.87" height="1.3" fill="#2fb02f" opacity="0.55"/><rect x="17.99" y="320.8" width="0.93" height="1.3" fill="#2fb02f" opacity="0.55"/><rect x="19.86" y="320.8" width="1.87" height="1.3" fill="#2fb02f" opacity="0.55"/><rect x="22.66" y="320.8" width="5.60" height="1.3" fill="#2fb02f" opacity="0.55"/><rect x="29.19" y="320.8" width="0.93" height="1.3" fill="#2fb02f" opacity="0.55"/><rect x="31.06" y="320.8" width="0.93" height="1.3" fill="#2fb02f" opacity="0.55"/><rect x="32.92" y="320.8" width="1.87" height="1.3" fill="#2fb02f" opacity="0.55"/><rect x="35.72" y="320.8" width="4.67" height="1.3" fill="#2fb02f" opacity="0.55"/><rect x="41.32" y="320.8" width="1.87" height="1.3" fill="#2fb02f" opacity="0.55"/><rect x="44.12" y="320.8" width="12.13" height="1.3" fill="#2fb02f" opacity="0.55"/><rect x="6.80" y="322.8" width="12.13" height="1.3" fill="#2fb02f" opacity="0.55"/><rect x="19.86" y="322.8" width="0.93" height="1.3" fill="#2fb02f" opacity="0.55"/><rect x="21.73" y="322.8" width="0.93" height="1.3" fill="#2fb02f" opacity="0.55"/><rect x="23.59" y="322.8" width="0.93" height="1.3" fill="#2fb02f" opacity="0.55"/><rect x="25.46" y="322.8" width="8.40" height="1.3" fill="#2fb02f" opacity="0.55"/><rect x="34.79" y="322.8" width="0.93" height="1.3" fill="#2fb02f" opacity="0.55"/><rect x="36.65" y="322.8" width="8.40" height="1.3" fill="#2fb02f" opacity="0.55"/><rect x="4.93" y="324.8" width="2.80" height="1.3" fill="#2fb02f" opacity="0.55"/><rect x="3.07" y="326.8" width="2.80" height="1.3" fill="#2fb02f" opacity="0.55"/><rect x="3.07" y="328.5" width="1" height="2" fill="#2fb02f" opacity="0.7"/><rect x="4.00" y="329" width="69.04" height="1" fill="#1c921c" opacity="0.95"/><rect x="3.07" y="330.5" width="1" height="2" fill="#2fb02f" opacity="0.7"/><rect x="4.93" y="330.8" width="0.93" height="1.3" fill="#2fb02f" opacity="0.55"/><rect x="6.80" y="330.8" width="3.73" height="1.3" fill="#2fb02f" opacity="0.55"/><rect x="11.46" y="330.8" width="5.60" height="1.3" fill="#2fb02f" opacity="0.55"/><rect x="17.99" y="330.8" width="2.80" height="1.3" fill="#2fb02f" opacity="0.55"/><rect x="21.73" y="330.8" width="3.73" height="1.3" fill="#2fb02f" opacity="0.55"/><rect x="26.39" y="330.8" width="3.73" height="1.3" fill="#2fb02f" opacity="0.55"/><rect x="3.07" y="332.5" width="1" height="2" fill="#2fb02f" opacity="0.7"/><rect x="4.00" y="333" width="69.04" height="1" fill="#1c921c" opacity="0.95"/><rect x="3.07" y="334.8" width="2.80" height="1.3" fill="#2fb02f" opacity="0.55"/><rect x="6.80" y="334.8" width="14.00" height="1.3" fill="#2fb02f" opacity="0.55"/><rect x="4.93" y="336.8" width="1.87" height="1.3" fill="#2fb02f" opacity="0.55"/><rect x="7.73" y="336.8" width="6.53" height="1.3" fill="#2fb02f" opacity="0.55"/><rect x="15.20" y="336.8" width="0.93" height="1.3" fill="#2fb02f" opacity="0.55"/><rect x="17.06" y="336.8" width="11.20" height="1.3" fill="#2fb02f" opacity="0.55"/><rect x="29.19" y="336.8" width="0.93" height="1.3" fill="#2fb02f" opacity="0.55"/><rect x="31.06" y="336.8" width="6.53" height="1.3" fill="#2fb02f" opacity="0.55"/><rect x="6.80" y="338.8" width="11.20" height="1.3" fill="#2fb02f" opacity="0.55"/><rect x="18.93" y="338.8" width="1.87" height="1.3" fill="#2fb02f" opacity="0.55"/><rect x="21.73" y="338.8" width="11.20" height="1.3" fill="#2fb02f" opacity="0.55"/><rect x="6.80" y="340.8" width="13.06" height="1.3" fill="#2fb02f" opacity="0.55"/><rect x="20.79" y="340.8" width="0.93" height="1.3" fill="#2fb02f" opacity="0.55"/><rect x="22.66" y="340.8" width="13.06" height="1.3" fill="#2fb02f" opacity="0.55"/><rect x="36.65" y="340.8" width="7.46" height="1.3" fill="#2fb02f" opacity="0.55"/><rect x="45.05" y="340.8" width="0.93" height="1.3" fill="#2fb02f" opacity="0.55"/><rect x="46.92" y="340.8" width="6.53" height="1.3" fill="#2fb02f" opacity="0.55"/><rect x="4.93" y="342.8" width="2.80" height="1.3" fill="#2fb02f" opacity="0.55"/><rect x="3.07" y="344.8" width="2.80" height="1.3" fill="#2fb02f" opacity="0.55"/><rect x="3.07" y="346.5" width="1" height="2" fill="#2fb02f" opacity="0.7"/><rect x="4.00" y="347" width="69.04" height="1" fill="#1c921c" opacity="0.95"/><rect x="3.07" y="348.5" width="1" height="2" fill="#2fb02f" opacity="0.7"/><rect x="4.93" y="348.8" width="0.93" height="1.3" fill="#2fb02f" opacity="0.55"/><rect x="6.80" y="348.8" width="3.73" height="1.3" fill="#2fb02f" opacity="0.55"/><rect x="11.46" y="348.8" width="5.60" height="1.3" fill="#2fb02f" opacity="0.55"/><rect x="17.99" y="348.8" width="2.80" height="1.3" fill="#2fb02f" opacity="0.55"/><rect x="21.73" y="348.8" width="3.73" height="1.3" fill="#2fb02f" opacity="0.55"/><rect x="26.39" y="348.8" width="1.87" height="1.3" fill="#2fb02f" opacity="0.55"/><rect x="3.07" y="350.5" width="1" height="2" fill="#2fb02f" opacity="0.7"/><rect x="4.00" y="351" width="69.04" height="1" fill="#1c921c" opacity="0.95"/><rect x="3.07" y="352.8" width="2.80" height="1.3" fill="#2fb02f" opacity="0.55"/><rect x="6.80" y="352.8" width="12.13" height="1.3" fill="#2fb02f" opacity="0.55"/><rect x="4.93" y="354.8" width="1.87" height="1.3" fill="#2fb02f" opacity="0.55"/><rect x="7.73" y="354.8" width="6.53" height="1.3" fill="#2fb02f" opacity="0.55"/><rect x="15.20" y="354.8" width="0.93" height="1.3" fill="#2fb02f" opacity="0.55"/><rect x="17.06" y="354.8" width="0.93" height="1.3" fill="#2fb02f" opacity="0.55"/><rect x="6.80" y="356.8" width="11.20" height="1.3" fill="#2fb02f" opacity="0.55"/><rect x="18.93" y="356.8" width="1.87" height="1.3" fill="#2fb02f" opacity="0.55"/><rect x="21.73" y="356.8" width="11.20" height="1.3" fill="#2fb02f" opacity="0.55"/><rect x="6.80" y="358.8" width="13.06" height="1.3" fill="#2fb02f" opacity="0.55"/><rect x="20.79" y="358.8" width="0.93" height="1.3" fill="#2fb02f" opacity="0.55"/><rect x="22.66" y="358.8" width="13.06" height="1.3" fill="#2fb02f" opacity="0.55"/><rect x="36.65" y="358.8" width="6.53" height="1.3" fill="#2fb02f" opacity="0.55"/><rect x="4.93" y="360.8" width="2.80" height="1.3" fill="#2fb02f" opacity="0.55"/><rect x="3.07" y="362.8" width="2.80" height="1.3" fill="#2fb02f" opacity="0.55"/><rect x="3.07" y="364.5" width="1" height="2" fill="#2fb02f" opacity="0.7"/><rect x="4.00" y="365" width="69.04" height="1" fill="#1c921c" opacity="0.95"/><rect x="3.07" y="366.5" width="1" height="2" fill="#2fb02f" opacity="0.7"/><rect x="4.93" y="366.8" width="0.93" height="1.3" fill="#2fb02f" opacity="0.55"/><rect x="6.80" y="366.8" width="4.67" height="1.3" fill="#2fb02f" opacity="0.55"/><rect x="12.40" y="366.8" width="5.60" height="1.3" fill="#2fb02f" opacity="0.55"/><rect x="3.07" y="368.5" width="1" height="2" fill="#2fb02f" opacity="0.7"/><rect x="4.00" y="369" width="69.04" height="1" fill="#1c921c" opacity="0.95"/><rect x="3.07" y="370.8" width="2.80" height="1.3" fill="#2fb02f" opacity="0.55"/><rect x="6.80" y="370.8" width="5.60" height="1.3" fill="#2fb02f" opacity="0.55"/><rect x="4.93" y="372.8" width="4.67" height="1.3" fill="#2fb02f" opacity="0.55"/><rect x="4.93" y="374.8" width="17.73" height="1.3" fill="#2fb02f" opacity="0.55"/><rect x="4.93" y="376.8" width="14.93" height="1.3" fill="#2fb02f" opacity="0.55"/><rect x="3.07" y="378.8" width="2.80" height="1.3" fill="#2fb02f" opacity="0.55"/><rect x="3.07" y="380.5" width="1" height="2" fill="#2fb02f" opacity="0.7"/><rect x="4.00" y="381" width="69.04" height="1" fill="#1c921c" opacity="0.95"/><rect x="3.07" y="382.5" width="1" height="2" fill="#2fb02f" opacity="0.7"/><rect x="4.93" y="382.8" width="0.93" height="1.3" fill="#2fb02f" opacity="0.55"/><rect x="6.80" y="382.8" width="5.60" height="1.3" fill="#2fb02f" opacity="0.55"/><rect x="13.33" y="382.8" width="7.46" height="1.3" fill="#2fb02f" opacity="0.55"/><rect x="21.73" y="382.8" width="9.33" height="1.3" fill="#2fb02f" opacity="0.55"/><rect x="3.07" y="384.5" width="1" height="2" fill="#2fb02f" opacity="0.7"/><rect x="4.00" y="385" width="69.04" height="1" fill="#1c921c" opacity="0.95"/><rect x="3.07" y="386.8" width="2.80" height="1.3" fill="#2fb02f" opacity="0.55"/><rect x="6.80" y="386.8" width="17.73" height="1.3" fill="#2fb02f" opacity="0.55"/><rect x="4.93" y="388.8" width="5.60" height="1.3" fill="#2fb02f" opacity="0.55"/><rect x="11.46" y="388.8" width="5.60" height="1.3" fill="#2fb02f" opacity="0.55"/><rect x="17.99" y="388.8" width="14.00" height="1.3" fill="#2fb02f" opacity="0.55"/><rect x="4.93" y="390.8" width="9.33" height="1.3" fill="#2fb02f" opacity="0.55"/><rect x="15.20" y="390.8" width="0.93" height="1.3" fill="#2fb02f" opacity="0.55"/><rect x="17.06" y="390.8" width="5.60" height="1.3" fill="#2fb02f" opacity="0.55"/><rect x="4.93" y="392.8" width="10.26" height="1.3" fill="#2fb02f" opacity="0.55"/><rect x="16.13" y="392.8" width="21.46" height="1.3" fill="#2fb02f" opacity="0.55"/><rect x="39.45" y="392.8" width="1.87" height="1.3" fill="#2fb02f" opacity="0.55"/><rect x="42.25" y="392.8" width="18.66" height="1.3" fill="#2fb02f" opacity="0.55"/><rect x="4.93" y="394.8" width="8.40" height="1.3" fill="#2fb02f" opacity="0.55"/><rect x="16.13" y="394.8" width="19.59" height="1.3" fill="#2fb02f" opacity="0.55"/><rect x="39.45" y="394.8" width="1.87" height="1.3" fill="#2fb02f" opacity="0.55"/><rect x="42.25" y="394.8" width="16.79" height="1.3" fill="#2fb02f" opacity="0.55"/><rect x="4.93" y="396.8" width="33.59" height="1.3" fill="#2fb02f" opacity="0.55"/><rect x="39.45" y="396.8" width="1.87" height="1.3" fill="#2fb02f" opacity="0.55"/><rect x="42.25" y="396.8" width="19.59" height="1.3" fill="#2fb02f" opacity="0.55"/><rect x="4.93" y="398.8" width="10.26" height="1.3" fill="#2fb02f" opacity="0.55"/><rect x="16.13" y="398.8" width="21.46" height="1.3" fill="#2fb02f" opacity="0.55"/><rect x="39.45" y="398.8" width="1.87" height="1.3" fill="#2fb02f" opacity="0.55"/><rect x="42.25" y="398.8" width="18.66" height="1.3" fill="#2fb02f" opacity="0.55"/><rect x="4.93" y="400.8" width="14.00" height="1.3" fill="#2fb02f" opacity="0.55"/><rect x="21.73" y="400.8" width="1.87" height="1.3" fill="#2fb02f" opacity="0.55"/><rect x="24.53" y="400.8" width="17.73" height="1.3" fill="#2fb02f" opacity="0.55"/><rect x="43.19" y="400.8" width="1.87" height="1.3" fill="#2fb02f" opacity="0.55"/><rect x="45.98" y="400.8" width="16.79" height="1.3" fill="#2fb02f" opacity="0.55"/><rect x="4.93" y="402.8" width="12.13" height="1.3" fill="#2fb02f" opacity="0.55"/><rect x="21.73" y="402.8" width="1.87" height="1.3" fill="#2fb02f" opacity="0.55"/><rect x="24.53" y="402.8" width="15.86" height="1.3" fill="#2fb02f" opacity="0.55"/><rect x="43.19" y="402.8" width="1.87" height="1.3" fill="#2fb02f" opacity="0.55"/><rect x="45.98" y="402.8" width="16.79" height="1.3" fill="#2fb02f" opacity="0.55"/><rect x="4.93" y="404.8" width="15.86" height="1.3" fill="#2fb02f" opacity="0.55"/><rect x="21.73" y="404.8" width="1.87" height="1.3" fill="#2fb02f" opacity="0.55"/><rect x="24.53" y="404.8" width="5.60" height="1.3" fill="#2fb02f" opacity="0.55"/><rect x="31.06" y="404.8" width="1.87" height="1.3" fill="#2fb02f" opacity="0.55"/><rect x="33.86" y="404.8" width="9.33" height="1.3" fill="#2fb02f" opacity="0.55"/><rect x="3.07" y="406.8" width="2.80" height="1.3" fill="#2fb02f" opacity="0.55"/><rect x="3.07" y="408.5" width="1" height="2" fill="#2fb02f" opacity="0.7"/><rect x="4.00" y="409" width="69.04" height="1" fill="#1c921c" opacity="0.95"/><rect x="3.07" y="410.5" width="1" height="2" fill="#2fb02f" opacity="0.7"/><rect x="4.93" y="410.8" width="0.93" height="1.3" fill="#2fb02f" opacity="0.55"/><rect x="6.80" y="410.8" width="7.46" height="1.3" fill="#2fb02f" opacity="0.55"/><rect x="15.20" y="410.8" width="9.33" height="1.3" fill="#2fb02f" opacity="0.55"/><rect x="25.46" y="410.8" width="2.80" height="1.3" fill="#2fb02f" opacity="0.55"/><rect x="29.19" y="410.8" width="1.87" height="1.3" fill="#2fb02f" opacity="0.55"/><rect x="31.99" y="410.8" width="2.80" height="1.3" fill="#2fb02f" opacity="0.55"/><rect x="35.72" y="410.8" width="5.60" height="1.3" fill="#2fb02f" opacity="0.55"/><rect x="42.25" y="410.8" width="3.73" height="1.3" fill="#2fb02f" opacity="0.55"/><rect x="3.07" y="412.5" width="1" height="2" fill="#2fb02f" opacity="0.7"/><rect x="4.00" y="413" width="69.04" height="1" fill="#1c921c" opacity="0.95"/><rect x="3.07" y="414.8" width="2.80" height="1.3" fill="#2fb02f" opacity="0.55"/><rect x="6.80" y="414.8" width="14.93" height="1.3" fill="#2fb02f" opacity="0.55"/><rect x="4.93" y="416.8" width="5.60" height="1.3" fill="#2fb02f" opacity="0.55"/><rect x="11.46" y="416.8" width="5.60" height="1.3" fill="#2fb02f" opacity="0.55"/><rect x="17.99" y="416.8" width="4.67" height="1.3" fill="#2fb02f" opacity="0.55"/><rect x="23.59" y="416.8" width="1.87" height="1.3" fill="#2fb02f" opacity="0.55"/><rect x="26.39" y="416.8" width="5.60" height="1.3" fill="#2fb02f" opacity="0.55"/><rect x="4.93" y="418.8" width="5.60" height="1.3" fill="#2fb02f" opacity="0.55"/><rect x="11.46" y="418.8" width="9.33" height="1.3" fill="#2fb02f" opacity="0.55"/><rect x="27.32" y="418.8" width="1.87" height="1.3" fill="#2fb02f" opacity="0.55"/><rect x="30.12" y="418.8" width="10.26" height="1.3" fill="#2fb02f" opacity="0.55"/><rect x="47.85" y="418.8" width="1.87" height="1.3" fill="#2fb02f" opacity="0.55"/><rect x="50.65" y="418.8" width="16.79" height="1.3" fill="#2fb02f" opacity="0.55"/><rect x="4.93" y="420.8" width="5.60" height="1.3" fill="#2fb02f" opacity="0.55"/><rect x="11.46" y="420.8" width="13.06" height="1.3" fill="#2fb02f" opacity="0.55"/><rect x="27.32" y="420.8" width="1.87" height="1.3" fill="#2fb02f" opacity="0.55"/><rect x="30.12" y="420.8" width="14.00" height="1.3" fill="#2fb02f" opacity="0.55"/><rect x="47.85" y="420.8" width="1.87" height="1.3" fill="#2fb02f" opacity="0.55"/><rect x="50.65" y="420.8" width="16.79" height="1.3" fill="#2fb02f" opacity="0.55"/><rect x="4.93" y="422.8" width="5.60" height="1.3" fill="#2fb02f" opacity="0.55"/><rect x="11.46" y="422.8" width="14.93" height="1.3" fill="#2fb02f" opacity="0.55"/><rect x="27.32" y="422.8" width="1.87" height="1.3" fill="#2fb02f" opacity="0.55"/><rect x="30.12" y="422.8" width="16.79" height="1.3" fill="#2fb02f" opacity="0.55"/><rect x="47.85" y="422.8" width="1.87" height="1.3" fill="#2fb02f" opacity="0.55"/><rect x="50.65" y="422.8" width="16.79" height="1.3" fill="#2fb02f" opacity="0.55"/><rect x="4.93" y="424.8" width="5.60" height="1.3" fill="#2fb02f" opacity="0.55"/><rect x="11.46" y="424.8" width="13.06" height="1.3" fill="#2fb02f" opacity="0.55"/><rect x="27.32" y="424.8" width="1.87" height="1.3" fill="#2fb02f" opacity="0.55"/><rect x="30.12" y="424.8" width="14.93" height="1.3" fill="#2fb02f" opacity="0.55"/><rect x="47.85" y="424.8" width="1.87" height="1.3" fill="#2fb02f" opacity="0.55"/><rect x="50.65" y="424.8" width="16.79" height="1.3" fill="#2fb02f" opacity="0.55"/><rect x="3.07" y="426.8" width="2.80" height="1.3" fill="#2fb02f" opacity="0.55"/></svg>
</div>
<div id="vscroll" class="abs"></div>
<div id="vthumb" class="abs"></div>
<div id="status" class="abs"></div>
<div class="abs" style="left:1px;top:531px;width:1002px;height:6px;border-radius:0 0 6px 6px;background:linear-gradient(180deg,#e2e9ef 0,#d4dfe8 3px,#dfe8ef 4px,#fdfdfe 5px)"></div>
<div class="st" style="left:12px;letter-spacing:-0.19px">Line 1, Column 1</div>
<div class="st" style="left:810px;letter-spacing:-0.45px">Spaces: 2</div>
<div class="st" style="left:929px;letter-spacing:-0.2px">Ruby</div>
</body></html>
